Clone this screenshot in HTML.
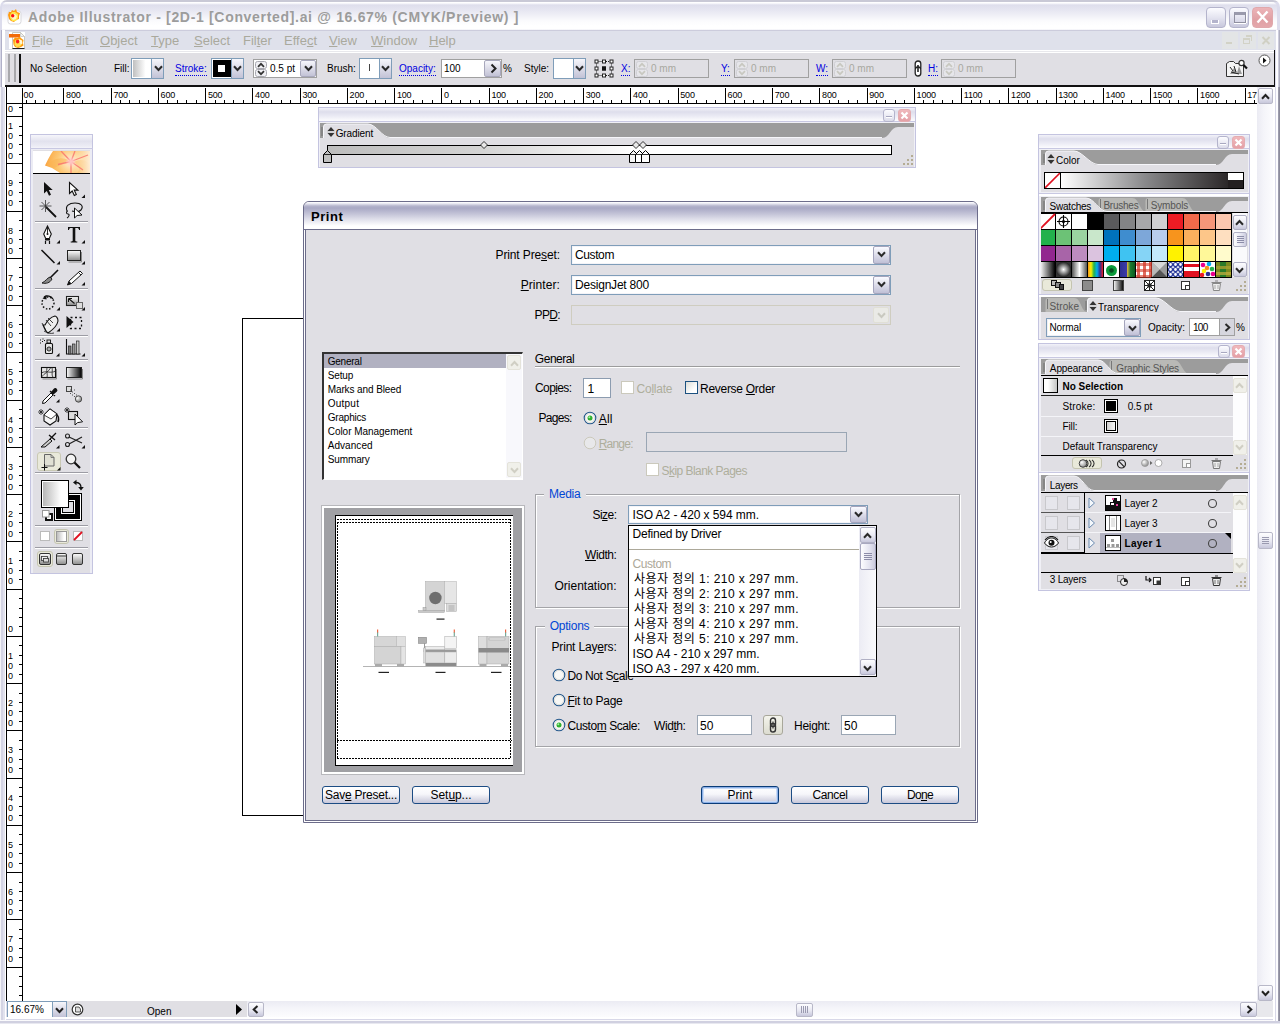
<!DOCTYPE html>
<html><head><meta charset="utf-8"><title>Adobe Illustrator</title>
<style>
*{box-sizing:border-box;margin:0;padding:0}
html,body{width:1280px;height:1024px;overflow:hidden;background:#fff}
body{position:relative;font-family:"Liberation Sans","Noto Sans CJK KR",sans-serif;font-size:10px;color:#000}
.a{position:absolute}
.t{position:absolute;white-space:nowrap;line-height:1}
u{text-decoration:underline;text-underline-offset:1px}
.wb{top:7px;width:20px;height:21px;border-radius:4px;border:1px solid #b4b4cc;background:linear-gradient(#fcfcff,#e4e4f0 50%,#c8c8dc)}
.mi{top:34px;font-size:13px;color:#aaa99d}
.mdi{top:32px;width:16px;height:17px;background:#e3e5e6}
.cl{top:64px;font-size:10px}
.bl{color:#0000e0;border-bottom:1px dotted #0000e0;padding-bottom:1px}
.cb{border:1px solid #7f9db9;top:58px;height:21px;background:#fff}
.dd{position:absolute;right:0;top:0;bottom:0;background:#dcdce6;border-left:1px solid #7f9db9}
.gf{top:59px;height:19px;border:1px solid #a0a0a0;background:#e0dfe4}
.gf b{position:absolute;left:10px;top:4px;font-weight:normal;font-size:10px;color:#a8a8a0;line-height:1}
.chev{position:absolute}
.sbb{width:15px;height:16px;border:1px solid #b8b8c8;border-radius:2px;background:linear-gradient(#fdfdff,#e8e8f2 55%,#c8c8dc)}
.sbh{border:1px solid #b8b8c8;border-radius:2px;background:linear-gradient(#fdfdff,#e8e8f2 55%,#c8c8dc)}
/* frame */
#frame{left:0;top:0;width:1280px;height:1024px;background:linear-gradient(#c9c9d6 0 2px,#dcdcec 2px);border-radius:7px 7px 0 0}
#title{left:2px;top:2px;width:1275px;height:28px;border-radius:5px 5px 0 0;background:linear-gradient(#fff 0,#fdfdff 1px,#dedeec 3px,#e4e4f0 7px,#efeff6 13px,#fbfbfd 19px,#fff 24px,#fff 27px,#ececf4 28px)}
#menu{left:5px;top:30px;width:1271px;height:20px;background:#dfe1eb;border-top:1px solid #ccccdc}
#ctrl{left:5px;top:50px;width:1270px;height:37px;background:linear-gradient(#fff 0 1px,#e8e8ec 1px 2px,#fff 2px 3px,#e0dfe4 3px);border-bottom:2px solid #111;border-right:1px solid #111}
#work{left:6px;top:87px;width:1252px;height:914px;background:#fff}
</style></head><body>
<div id="frame" class="a"></div>
<div id="title" class="a"></div>
<div id="menu" class="a"></div>
<div id="ctrl" class="a"></div>
<div id="work" class="a"></div>
<!--TITLE-->
<svg class="a" style="left:6px;top:8px" width="16" height="17" viewBox="0 0 16 17"><rect x="2" y="3" width="13" height="13" rx="2.5" fill="#fff" stroke="#d8d8dc" stroke-width="1"/><path d="M2 7l1-3 2 0 1-2 2 1 2-2 1 3 3 1-1 3 0 3-3 1-2 2-3-1-2-2z" fill="#ff9a10"/><path d="M4 7l2-3 3 0 3 2 0 4-2 3-4 0-2-3z" fill="#ffe44a"/><path d="M6 6l3 0 2 2-1 3-3 1-2-3z" fill="#fff6c8"/><circle cx="6.7" cy="7.8" r="1.7" fill="#ff1010"/></svg>
<div class="t" style="left:28px;top:10px;font-size:14px;font-weight:bold;color:#9c9c9c;letter-spacing:.68px">Adobe Illustrator - [2D-1 [Converted].ai @ 16.67% (CMYK/Preview) ]</div>
<div class="a wb" style="left:1206px"><i style="left:4px;top:12px;width:8px;height:4px;background:#b4b4cc;border:1px solid #fff;border-top:0;box-shadow:0 0 0 0 #fff;position:absolute"></i></div>
<div class="a wb" style="left:1229px"><i style="left:4px;top:4px;width:12px;height:11px;border:1px solid #9090a0;border-top:3px solid #9a9aac;position:absolute;box-shadow:0 1px 0 #fff,1px 0 0 #fff"></i></div>
<div class="a wb" style="left:1252px;width:21px;background:linear-gradient(#ecb4b8,#e0a0a4 60%,#e4a8ac);border-color:#e0a8ac"><svg width="21" height="20" viewBox="0 0 21 20" style="position:absolute;left:-1px;top:-1px"><path d="M5.5 4.5l10 11M15.5 4.5l-10 11" stroke="#fff" stroke-width="2.4" fill="none"/></svg></div>

<!--MENU-->
<svg class="a" style="left:8px;top:31px" width="18" height="19" viewBox="8 31 18 19"><rect x="9" y="32" width="16" height="17" fill="#fff"/><path d="M12.500 32.500h8l4 4v12h-12z" fill="#fff" stroke="#c8c8c0" stroke-width="1"/><path d="M20.500 32.500v4h4z" fill="#f0f0f0" stroke="#b8b8b0" stroke-width=".6"/><path d="M12.500 48.500h12" stroke="#222" stroke-width="1"/><rect x="9" y="34" width="11" height="3.500" fill="#f26a0a"/><path d="M13 40l2-2.500 2.500.5 2-1.500 2 2 2 1.500-.5 3 .5 2.500-2.500 1.500-3 1-3-1-1.500-2.500z" fill="#ff9a10"/><path d="M15 40.500l3-1.500 3.500 1.500.5 3.500-2 2.500-3.500.5-2-2.500z" fill="#ffe050"/><path d="M19 39l3 1.500.5 3-2 1z" fill="#fff8d8"/><ellipse cx="17.600" cy="41.500" rx="1.700" ry="2.100" fill="#ff2020"/></svg>
<div class="t mi" style="left:32px"><u>F</u>ile</div>
<div class="t mi" style="left:66px"><u>E</u>dit</div>
<div class="t mi" style="left:100px"><u>O</u>bject</div>
<div class="t mi" style="left:151px"><u>T</u>ype</div>
<div class="t mi" style="left:194px"><u>S</u>elect</div>
<div class="t mi" style="left:243px">Fil<u>t</u>er</div>
<div class="t mi" style="left:284px">Effe<u>c</u>t</div>
<div class="t mi" style="left:329px"><u>V</u>iew</div>
<div class="t mi" style="left:371px"><u>W</u>indow</div>
<div class="t mi" style="left:429px"><u>H</u>elp</div>
<div class="a mdi" style="left:1222px"><i class="a" style="left:4px;top:10px;width:6px;height:2px;background:#d2d2c6"></i></div>
<div class="a mdi" style="left:1240px"><i class="a" style="left:3px;top:6px;width:7px;height:6px;border:1px solid #d2d2c6;border-top-width:2px"></i><i class="a" style="left:6px;top:3px;width:6px;height:6px;border:1px solid #d2d2c6;border-top-width:2px;border-left:0;border-bottom:0"></i></div>
<div class="a mdi" style="left:1258px"><svg width="16" height="17" style="position:absolute;left:0;top:0"><path d="M4.500 5l7 7M11.500 5l-7 7" stroke="#d0d0c4" stroke-width="2" fill="none"/></svg></div>

<!--CTRL-->
<div class="a" style="left:8px;top:54px;width:2px;height:28px;background:#a8a8ac"></div><div class="a" style="left:14px;top:54px;width:2px;height:28px;background:#a8a8ac"></div><div class="a" style="left:19px;top:54px;width:2px;height:29px;background:#111"></div>
<div class="t cl" style="left:30px">No Selection</div>
<div class="t cl" style="left:114px">Fill:</div>
<div class="a cb" style="left:131px;width:33px"><i class="a" style="left:1px;top:1px;width:18px;height:17px;background:linear-gradient(90deg,#c0c0c0,#fff 70%)"></i><i class="dd" style="width:12px;background:linear-gradient(#f6f6fb,#dcdce8 50%,#c2c2d6)"></i></div><svg class="a" style="left:154px;top:65px" width="9" height="7" viewBox="0 0 9 7"><path d="M1 1.200l3.500 3.800L8 1.200" stroke="#2a2a2a" stroke-width="2" fill="none"/></svg>
<div class="t cl bl" style="left:175px">Stroke:</div>
<div class="a cb" style="left:211px;width:33px"><i class="a" style="left:1px;top:1px;width:18px;height:17px;background:#000"></i><i class="a" style="left:6px;top:6px;width:7px;height:7px;background:#fff"></i><i class="dd" style="width:12px;background:linear-gradient(#f6f6fb,#dcdce8 50%,#c2c2d6)"></i></div><svg class="a" style="left:233px;top:65px" width="9" height="7" viewBox="0 0 9 7"><path d="M1 1.200l3.500 3.800L8 1.200" stroke="#2a2a2a" stroke-width="2" fill="none"/></svg>
<div class="a" style="left:253px;top:59px;width:64px;height:19px;border:1px solid #a0a0a0;background:#fff"><i class="a" style="right:0;top:0;bottom:0;width:16px;background:linear-gradient(#f6f6fb,#dcdce8 50%,#c2c2d6);border:1px solid #a8a8bc;border-radius:2px"></i></div><svg class="a" style="left:255px;top:61px" width="12" height="16" viewBox="0 0 12 16"><rect x=".5" y=".5" width="11" height="7" rx="2" fill="#f0f0f4" stroke="#a8a8b0"/><rect x=".5" y="8.500" width="11" height="7" rx="2" fill="#f0f0f4" stroke="#a8a8b0"/><path d="M3 5.800l3-3 3 3M3 10.200l3 3 3-3" stroke="#333" stroke-width="1.700" fill="none"/></svg><svg class="a" style="left:304px;top:65px" width="9" height="7" viewBox="0 0 9 7"><path d="M1 1.200l3.500 3.800L8 1.200" stroke="#2a2a2a" stroke-width="2" fill="none"/></svg>
<div class="t cl" style="left:270px">0.5 pt</div>
<div class="t cl" style="left:327px">Brush:</div>
<div class="a cb" style="left:359px;width:33px"><i class="a" style="left:9px;top:5px;width:1px;height:7px;background:#444"></i><i class="dd" style="width:12px;background:linear-gradient(#f6f6fb,#dcdce8 50%,#c2c2d6)"></i></div><svg class="a" style="left:381px;top:65px" width="9" height="7" viewBox="0 0 9 7"><path d="M1 1.200l3.500 3.800L8 1.200" stroke="#2a2a2a" stroke-width="2" fill="none"/></svg>
<div class="t cl bl" style="left:399px">Opacity:</div>
<div class="a" style="left:441px;top:59px;width:61px;height:19px;border:1px solid #a0a0a0;background:#fff"><i class="a" style="right:0;top:0;bottom:0;width:17px;background:linear-gradient(#f6f6fb,#dcdce8 50%,#c2c2d6);border:1px solid #a8a8bc;border-radius:2px"></i></div><svg class="a" style="left:490px;top:63px" width="8" height="11" viewBox="0 0 8 11"><path d="M1.500 1.500l4 4-4 4" stroke="#222" stroke-width="2" fill="none"/></svg>
<div class="t cl" style="left:444px">100</div><div class="t cl" style="left:503px">%</div>
<div class="t cl" style="left:524px">Style:</div>
<div class="a cb" style="left:553px;width:33px"><i class="dd" style="width:12px;background:linear-gradient(#f6f6fb,#dcdce8 50%,#c2c2d6)"></i></div><svg class="a" style="left:575px;top:65px" width="9" height="7" viewBox="0 0 9 7"><path d="M1 1.200l3.500 3.800L8 1.200" stroke="#2a2a2a" stroke-width="2" fill="none"/></svg>
<svg class="a" style="left:594px;top:59px" width="20" height="19" viewBox="0 0 20 19"><rect x="1" y="1" width="3" height="3" fill="#fff" stroke="#222" stroke-width="1"/><rect x="8.5" y="1" width="3" height="3" fill="#fff" stroke="#222" stroke-width="1"/><rect x="16" y="1" width="3" height="3" fill="#fff" stroke="#222" stroke-width="1"/><rect x="1" y="8" width="3" height="3" fill="#fff" stroke="#222" stroke-width="1"/><rect x="8.5" y="8" width="3" height="3" fill="#fff" stroke="#222" stroke-width="1"/><rect x="16" y="8" width="3" height="3" fill="#fff" stroke="#222" stroke-width="1"/><rect x="1" y="15" width="3" height="3" fill="#fff" stroke="#222" stroke-width="1"/><rect x="8.5" y="15" width="3" height="3" fill="#fff" stroke="#222" stroke-width="1"/><rect x="16" y="15" width="3" height="3" fill="#fff" stroke="#222" stroke-width="1"/><path d="M4.500 2.500h4M12 2.500h4M4.500 16.500h4M12 16.500h4M2.500 4.500v3.500M2.500 11.500v3.500M17.500 4.500v3.500M17.500 11.500v3.500" stroke="#222" stroke-dasharray="1 1"/><rect x="8" y="7.500" width="4" height="4" fill="#111"/></svg>
<div class="t cl bl" style="left:621px">X:</div><div class="a gf" style="left:634px;width:75px"><b style="left:16px">0 mm</b></div><svg class="a" style="left:636px;top:61px" width="12" height="16" viewBox="0 0 12 16"><rect x=".5" y=".5" width="11" height="7" rx="2" fill="#e6e6ea" stroke="#d0d0d4"/><rect x=".5" y="8.500" width="11" height="7" rx="2" fill="#e6e6ea" stroke="#d0d0d4"/><path d="M3 5.800l3-3 3 3M3 10.200l3 3 3-3" stroke="#c8c8c0" stroke-width="1.700" fill="none"/></svg>
<div class="t cl bl" style="left:721px">Y:</div><div class="a gf" style="left:734px;width:75px"><b style="left:16px">0 mm</b></div><svg class="a" style="left:736px;top:61px" width="12" height="16" viewBox="0 0 12 16"><rect x=".5" y=".5" width="11" height="7" rx="2" fill="#e6e6ea" stroke="#d0d0d4"/><rect x=".5" y="8.500" width="11" height="7" rx="2" fill="#e6e6ea" stroke="#d0d0d4"/><path d="M3 5.800l3-3 3 3M3 10.200l3 3 3-3" stroke="#c8c8c0" stroke-width="1.700" fill="none"/></svg>
<div class="t cl bl" style="left:816px">W:</div><div class="a gf" style="left:832px;width:75px"><b style="left:16px">0 mm</b></div><svg class="a" style="left:834px;top:61px" width="12" height="16" viewBox="0 0 12 16"><rect x=".5" y=".5" width="11" height="7" rx="2" fill="#e6e6ea" stroke="#d0d0d4"/><rect x=".5" y="8.500" width="11" height="7" rx="2" fill="#e6e6ea" stroke="#d0d0d4"/><path d="M3 5.800l3-3 3 3M3 10.200l3 3 3-3" stroke="#c8c8c0" stroke-width="1.700" fill="none"/></svg>
<div class="t cl bl" style="left:928px">H:</div><div class="a gf" style="left:941px;width:75px"><b style="left:16px">0 mm</b></div><svg class="a" style="left:943px;top:61px" width="12" height="16" viewBox="0 0 12 16"><rect x=".5" y=".5" width="11" height="7" rx="2" fill="#e6e6ea" stroke="#d0d0d4"/><rect x=".5" y="8.500" width="11" height="7" rx="2" fill="#e6e6ea" stroke="#d0d0d4"/><path d="M3 5.800l3-3 3 3M3 10.200l3 3 3-3" stroke="#c8c8c0" stroke-width="1.700" fill="none"/></svg>
<svg class="a" style="left:913px;top:60px" width="10" height="17" viewBox="0 0 10 17"><rect x="2.200" y="1" width="5.600" height="9" rx="2.800" fill="#fff" stroke="#222" stroke-width="1.300"/><rect x="2.200" y="7" width="5.600" height="9" rx="2.800" fill="#fff" stroke="#222" stroke-width="1.300"/><path d="M5 5v7" stroke="#222" stroke-width="1.600"/></svg>
<svg class="a" style="left:1225px;top:58px" width="24" height="21" viewBox="0 0 24 21"><path d="M1.500 5.500l3-2h4l2 2h8v13h-17z" fill="#f4f4f4" stroke="#333" stroke-width="1"/><path d="M5 16l4-6 3 5 2-7 3 8z" fill="#999"/><path d="M5 9l3 4M9 8l2 6M6 14l8 2" stroke="#222" stroke-width="1"/><circle cx="16.500" cy="5" r="2.600" fill="#fff" stroke="#333" stroke-width="1.200"/><path d="M18.500 7l3.500 3.500" stroke="#111" stroke-width="2.200"/></svg>
<svg class="a" style="left:1258px;top:54px" width="13" height="13" viewBox="0 0 13 13"><circle cx="6.500" cy="6.500" r="5.500" fill="#fff" stroke="#555" stroke-width="1"/><path d="M5 3.500v6l3.500-3z" fill="#111"/></svg>
<!--/CTRL-->
<!--RULERS-->
<svg class="a" style="left:23px;top:88px;font-family:'Liberation Sans',sans-serif;font-size:9px;letter-spacing:-.2px" width="1234" height="16" viewBox="0 0 1234 16" shape-rendering="crispEdges"><rect width="1234" height="16" fill="#fff"/><path d="M3.5 12v4M12.5 12v4M21.5 12v4M31.5 12v4M40.5 0v16M50.5 12v4M59.5 12v4M69.5 12v4M78.5 12v4M88.5 0v16M97.5 12v4M106.5 12v4M116.5 12v4M125.5 12v4M135.5 0v16M144.5 12v4M154.5 12v4M163.5 12v4M173.5 12v4M182.5 0v16M192.5 12v4M201.5 12v4M210.5 12v4M220.5 12v4M229.5 0v16M239.5 12v4M248.5 12v4M258.5 12v4M267.5 12v4M277.5 0v16M286.5 12v4M295.5 12v4M305.5 12v4M314.5 12v4M324.5 0v16M333.5 12v4M343.5 12v4M352.5 12v4M362.5 12v4M371.5 0v16M380.5 12v4M390.5 12v4M399.5 12v4M409.5 12v4M418.5 0v16M428.5 12v4M437.5 12v4M447.5 12v4M456.5 12v4M466.5 0v16M475.5 12v4M484.5 12v4M494.5 12v4M503.5 12v4M513.5 0v16M522.5 12v4M532.5 12v4M541.5 12v4M551.5 12v4M560.5 0v16M570.5 12v4M579.5 12v4M588.5 12v4M598.5 12v4M607.5 0v16M617.5 12v4M626.5 12v4M636.5 12v4M645.5 12v4M655.5 0v16M664.5 12v4M673.5 12v4M683.5 12v4M692.5 12v4M702.5 0v16M711.5 12v4M721.5 12v4M730.5 12v4M740.5 12v4M749.5 0v16M758.5 12v4M768.5 12v4M777.5 12v4M787.5 12v4M796.5 0v16M806.5 12v4M815.5 12v4M825.5 12v4M834.5 12v4M844.5 0v16M853.5 12v4M862.5 12v4M872.5 12v4M881.5 12v4M891.5 0v16M900.5 12v4M910.5 12v4M919.5 12v4M929.5 12v4M938.5 0v16M948.5 12v4M957.5 12v4M966.5 12v4M976.5 12v4M985.5 0v16M995.5 12v4M1004.5 12v4M1014.5 12v4M1023.5 12v4M1033.5 0v16M1042.5 12v4M1051.5 12v4M1061.5 12v4M1070.5 12v4M1080.5 0v16M1089.5 12v4M1099.5 12v4M1108.5 12v4M1118.5 12v4M1127.5 0v16M1136.5 12v4M1146.5 12v4M1155.5 12v4M1165.5 12v4M1174.5 0v16M1184.5 12v4M1193.5 12v4M1203.5 12v4M1212.5 12v4M1222.5 0v16M1231.5 12v4M0 15.500h1234" stroke="#000" stroke-width="1" fill="none"/><text x="0.6" y="10">00</text><text x="43.1" y="10">800</text><text x="90.4" y="10">700</text><text x="137.6" y="10">600</text><text x="184.9" y="10">500</text><text x="232.1" y="10">400</text><text x="279.4" y="10">300</text><text x="326.6" y="10">200</text><text x="373.9" y="10">100</text><text x="421.1" y="10">0</text><text x="468.4" y="10">100</text><text x="515.6" y="10">200</text><text x="562.8" y="10">300</text><text x="610.1" y="10">400</text><text x="657.3" y="10">500</text><text x="704.6" y="10">600</text><text x="751.8" y="10">700</text><text x="799.1" y="10">800</text><text x="846.3" y="10">900</text><text x="893.6" y="10">1000</text><text x="940.8" y="10">1100</text><text x="988.1" y="10">1200</text><text x="1035.3" y="10">1300</text><text x="1082.6" y="10">1400</text><text x="1129.8" y="10">1500</text><text x="1177.1" y="10">1600</text><text x="1224.3" y="10">1700</text></svg>
<svg class="a" style="left:7px;top:104px;font-family:'Liberation Sans',sans-serif;font-size:9px" width="16" height="897" viewBox="0 0 16 897" shape-rendering="crispEdges"><rect width="16" height="897" fill="#fff"/><path d="M12 3.5h4M0 12.5h16M12 22.5h4M12 31.5h4M12 40.5h4M12 50.5h4M0 59.5h16M12 69.5h4M12 78.5h4M12 88.5h4M12 97.5h4M0 107.5h16M12 116.5h4M12 126.5h4M12 135.5h4M12 144.5h4M0 154.5h16M12 163.5h4M12 173.5h4M12 182.5h4M12 192.5h4M0 201.5h16M12 211.5h4M12 220.5h4M12 229.5h4M12 239.5h4M0 248.5h16M12 258.5h4M12 267.5h4M12 277.5h4M12 286.5h4M0 296.5h16M12 305.5h4M12 314.5h4M12 324.5h4M12 333.5h4M0 343.5h16M12 352.5h4M12 362.5h4M12 371.5h4M12 381.5h4M0 390.5h16M12 400.5h4M12 409.5h4M12 418.5h4M12 428.5h4M0 437.5h16M12 447.5h4M12 456.5h4M12 466.5h4M12 475.5h4M0 485.5h16M12 494.5h4M12 504.5h4M12 513.5h4M12 522.5h4M0 532.5h16M12 541.5h4M12 551.5h4M12 560.5h4M12 570.5h4M0 579.5h16M12 589.5h4M12 598.5h4M12 607.5h4M12 617.5h4M0 626.5h16M12 636.5h4M12 645.5h4M12 655.5h4M12 664.5h4M0 674.5h16M12 683.5h4M12 692.5h4M12 702.5h4M12 711.5h4M0 721.5h16M12 730.5h4M12 740.5h4M12 749.5h4M12 759.5h4M0 768.5h16M12 778.5h4M12 787.5h4M12 796.5h4M12 806.5h4M0 815.5h16M12 825.5h4M12 834.5h4M12 844.5h4M12 853.5h4M0 863.5h16M12 872.5h4M12 882.5h4M12 891.5h4M15.500 0v897" stroke="#000" stroke-width="1" fill="none"/><text x="1" y="7.8">0</text><text x="1" y="25.0">1</text><text x="1" y="35.0">0</text><text x="1" y="45.0">0</text><text x="1" y="55.0">0</text><text x="1" y="82.3">9</text><text x="1" y="92.3">0</text><text x="1" y="102.3">0</text><text x="1" y="129.6">8</text><text x="1" y="139.6">0</text><text x="1" y="149.6">0</text><text x="1" y="176.8">7</text><text x="1" y="186.8">0</text><text x="1" y="196.8">0</text><text x="1" y="224.1">6</text><text x="1" y="234.1">0</text><text x="1" y="244.1">0</text><text x="1" y="271.3">5</text><text x="1" y="281.3">0</text><text x="1" y="291.3">0</text><text x="1" y="318.6">4</text><text x="1" y="328.6">0</text><text x="1" y="338.6">0</text><text x="1" y="365.8">3</text><text x="1" y="375.8">0</text><text x="1" y="385.8">0</text><text x="1" y="413.1">2</text><text x="1" y="423.1">0</text><text x="1" y="433.1">0</text><text x="1" y="460.3">1</text><text x="1" y="470.3">0</text><text x="1" y="480.3">0</text><text x="1" y="527.5">0</text><text x="1" y="554.8">1</text><text x="1" y="564.8">0</text><text x="1" y="574.8">0</text><text x="1" y="602.0">2</text><text x="1" y="612.0">0</text><text x="1" y="622.0">0</text><text x="1" y="649.3">3</text><text x="1" y="659.3">0</text><text x="1" y="669.3">0</text><text x="1" y="696.5">4</text><text x="1" y="706.5">0</text><text x="1" y="716.5">0</text><text x="1" y="743.8">5</text><text x="1" y="753.8">0</text><text x="1" y="763.8">0</text><text x="1" y="791.0">6</text><text x="1" y="801.0">0</text><text x="1" y="811.0">0</text><text x="1" y="838.3">7</text><text x="1" y="848.3">0</text><text x="1" y="858.3">0</text></svg>
<div class="a" style="left:6px;top:87px;width:1px;height:914px;background:#000"></div><div class="a" style="left:7px;top:88px;width:16px;height:16px;background:#fff;border-right:1px solid #000;border-bottom:1px solid #000"></div>

<!--CANVAS-->
<div class="a" style="left:242px;top:318px;width:500px;height:498px;border:1px solid #000"></div>

<!--TOOLBOX-->
<div class="a" style="left:30px;top:134px;width:63px;height:440px;background:#ececf4;border:1px solid #c4c4e0"></div>
<div class="a" style="left:31px;top:135px;width:61px;height:14px;background:linear-gradient(#f6f6fb,#e2e2ee 45%,#ececf5 80%,#f8f8fc)"></div>
<div class="a" style="left:30px;top:148px;width:63px;height:1px;background:#c8c8e2"></div>
<div class="a" style="left:33px;top:150px;width:57px;height:423px;background:#e0dfe4"></div>
<svg class="a" style="left:33px;top:151px" width="57" height="23" viewBox="0 0 57 23"><defs><radialGradient id="fl" cx="38" cy="10.500" r="27" gradientUnits="userSpaceOnUse"><stop offset="0" stop-color="#fff0ea"/><stop offset=".18" stop-color="#ffe3b8"/><stop offset=".5" stop-color="#fdc875"/><stop offset=".85" stop-color="#fbae4c"/><stop offset="1" stop-color="#f89a3c"/></radialGradient><linearGradient id="flr" x1="0" x2="1"><stop offset="0" stop-color="#fff" stop-opacity="0"/><stop offset="1" stop-color="#fff" stop-opacity=".75"/></linearGradient><filter id="bl" x="-20%" y="-20%" width="140%" height="140%"><feGaussianBlur stdDeviation=".7"/></filter><filter id="bl2" x="-20%" y="-20%" width="140%" height="140%"><feGaussianBlur stdDeviation="1.500"/></filter></defs><rect width="57" height="23" fill="#fff"/><path d="M12 14.500Q15 8 18 3L20 0H57V22H27Q22 19 19 17Z" fill="url(#fl)"/><path d="M13 14Q24 4 36 9Q28 14 21 17Z" fill="#fbb452" opacity=".55" filter="url(#bl)"/><path d="M40 11Q52 6 57 14V22H44Q50 16 40 11Z" fill="#fbb858" opacity=".5" filter="url(#bl)"/><rect x="42" width="15" height="22" fill="url(#flr)"/><g stroke="#f9716c" stroke-width="1.300" opacity=".8" fill="none" filter="url(#bl)"><path d="M38 10.500L28 0M38 10.500L42 0M38 10.500L55 4M38 10.500L50 19M38 10.500L38 22M38 10.500L25 13.500"/></g><circle cx="38" cy="10.500" r="3.500" fill="#ffc8c4" filter="url(#bl2)"/><rect y="22" width="57" height="1" fill="#000"/></svg>
<div class="a" style="left:35px;top:221px;width:53px;height:2px;background:linear-gradient(#9c9ca4 0 1px,#fff 1px)"></div>
<div class="a" style="left:35px;top:288px;width:53px;height:2px;background:linear-gradient(#9c9ca4 0 1px,#fff 1px)"></div>
<div class="a" style="left:35px;top:335px;width:53px;height:2px;background:linear-gradient(#9c9ca4 0 1px,#fff 1px)"></div>
<div class="a" style="left:35px;top:359px;width:53px;height:2px;background:linear-gradient(#9c9ca4 0 1px,#fff 1px)"></div>
<div class="a" style="left:35px;top:427px;width:53px;height:2px;background:linear-gradient(#9c9ca4 0 1px,#fff 1px)"></div>
<div class="a" style="left:35px;top:472px;width:53px;height:2px;background:linear-gradient(#9c9ca4 0 1px,#fff 1px)"></div>
<div class="a" style="left:35px;top:525px;width:53px;height:2px;background:linear-gradient(#9c9ca4 0 1px,#fff 1px)"></div>
<div class="a" style="left:35px;top:547px;width:53px;height:2px;background:linear-gradient(#9c9ca4 0 1px,#fff 1px)"></div>
<svg class="a" style="left:30px;top:174px" width="63" height="400" viewBox="30 174 63 400"><defs><linearGradient id="gw" x1="0" x2="1"><stop offset="0" stop-color="#fff"/><stop offset="1" stop-color="#000"/></linearGradient><linearGradient id="gg" x1="0" x2="0" y1="0" y2="1"><stop offset="0" stop-color="#fff"/><stop offset="1" stop-color="#8c8c8c"/></linearGradient><linearGradient id="gf" x1="0" x2="1"><stop offset="0" stop-color="#b8b8b8"/><stop offset=".75" stop-color="#fff"/></linearGradient><radialGradient id="gb" cx=".35" cy=".35" r=".7"><stop offset="0" stop-color="#fff"/><stop offset="1" stop-color="#777"/></radialGradient></defs><path d="M44 182v11.500l2.800-2.600 2.200 4.800 2-.9-2.200-4.800h3.900z" fill="#111"/><path d="M69.500 182.500v11l2.700-2.500 2.100 4.500 2-.9-2.100-4.500h3.700z" fill="#fff" stroke="#111" stroke-width="1.100"/><path d="M85 198v-3.500l-3.500 3.500z" fill="#111"/><path d="M46 207l10 10" stroke="#111" stroke-width="1.800"/><path d="M45.500 200v12M39.500 206h12M41.500 202l8 8M49.500 202l-8 8" stroke="#333" stroke-width=".8"/><path d="M67 211c-2-5 2-8 8-8s9 3 6 7c-2 2-6 2-9 1M68 211c-2 0-2 3 0 3s1 3-1 4" stroke="#111" stroke-width="1.100" fill="none"/><path d="M74.500 208v10l2.600-2.500 4.900-.5z" fill="#fff" stroke="#111" stroke-width="1"/><path d="M47.500 226l-3.800 8 2 4.500h3.600l2-4.500z" fill="#fff" stroke="#111" stroke-width="1.100"/><path d="M47.500 227v6" stroke="#111" stroke-width=".9"/><circle cx="47.500" cy="234" r="1" fill="#111"/><rect x="45" y="239" width="5" height="1.500" fill="#111"/><path d="M45.500 241v3M49.500 241v3" stroke="#111" stroke-width="1.200"/><path d="M60 243.5v-3.500l-3.500 3.500z" fill="#111"/><path d="M68 227h12v3h-1c0-1.500-1-2-2-2h-1.700v12.500c0 .8.700 1 2 1v.9h-6.600v-.9c1.300 0 2-.2 2-1V228h-1.700c-1 0-2 .5-2 2h-1z" fill="#111"/><path d="M85 243.5v-3.500l-3.500 3.500z" fill="#111"/><path d="M41.500 250l13 13" stroke="#111" stroke-width="1.500"/><path d="M60 264.5v-3.500l-3.500 3.500z" fill="#111"/><rect x="67.500" y="250.500" width="13" height="10" fill="url(#gg)" stroke="#222" stroke-width="1"/><path d="M68.500 262h13v-10" stroke="#888" stroke-width="1" fill="none"/><path d="M85 264.5v-3.500l-3.500 3.500z" fill="#111"/><path d="M58 270l-9 9" stroke="#111" stroke-width="1.600"/><path d="M50 277c-3 1-4 4-8 6 4 1 8 0 10-4z" fill="#888" stroke="#111" stroke-width=".9"/><path d="M80 271l2.500 2.500-11 10-4 1.500 1.500-4z" fill="#fff" stroke="#111" stroke-width="1"/><path d="M67.500 285l1.500-4 2.500 2.500z" fill="#111"/><path d="M78.500 272.500l2.500 2.500" stroke="#111" stroke-width=".9"/><path d="M85 285.5v-3.500l-3.500 3.500z" fill="#111"/><circle cx="48" cy="303" r="6" fill="none" stroke="#111" stroke-width="1.500" stroke-dasharray="1.500 1.800"/><path d="M44 297c3-2 7-1 9 2" stroke="#111" stroke-width="1.300" fill="none"/><path d="M42.500 298.500l4-3.500v4.500z" fill="#111"/><path d="M60 310.5v-3.500l-3.500 3.500z" fill="#111"/><rect x="66.500" y="296.500" width="12" height="9" fill="url(#gg)" stroke="#222" stroke-width="1.100"/><rect x="76.500" y="302.500" width="6" height="6" fill="#ddd" stroke="#666" stroke-width="1"/><path d="M68.500 298.500l6 5M68.500 298.500h3.500M68.500 298.500v3.500" stroke="#111" stroke-width="1.100" fill="none"/><path d="M85 310.5v-3.500l-3.500 3.500z" fill="#111"/><path d="M43 325c2 4 2 6 5 8 3-2 9-6 10-12 0-3-2-5-3-5-4 1-8 5-10 9z" fill="#eee" stroke="#111" stroke-width="1.100"/><path d="M42 323c1 2 3 5 4 8M46 320l5 6M48 318l5 5M44 331c3 2 7 3 10 2" stroke="#111" stroke-width=".8" fill="none"/><path d="M60 331.5v-3.500l-3.500 3.500z" fill="#111"/><path d="M66.500 316v12l7-6z" fill="#111"/><rect x="70.500" y="317.500" width="11" height="11" fill="none" stroke="#111" stroke-width="1.300" stroke-dasharray="2 2.500"/><rect x="45.500" y="343.500" width="7" height="10" rx="1" fill="#e8e8e8" stroke="#111" stroke-width="1.100"/><rect x="47" y="340" width="3.500" height="3" fill="#ddd" stroke="#111" stroke-width=".9"/><circle cx="49" cy="349" r="2" fill="#fff" stroke="#111" stroke-width="1"/><circle cx="49" cy="349" r=".7" fill="#111"/><path d="M40 340h1M42 341.500h1M40 343h1M42.500 339h1M44 340.500h1" stroke="#111" stroke-width="1"/><path d="M59.5 356.5v-3.500l-3.500 3.500z" fill="#111"/><path d="M66.500 339v15h14" stroke="#111" stroke-width="1.100" fill="none"/><rect x="68.500" y="346" width="2.500" height="8" fill="#777" stroke="#222" stroke-width=".7"/><rect x="72.500" y="344" width="2.500" height="10" fill="#999" stroke="#222" stroke-width=".7"/><rect x="76.500" y="341" width="2.500" height="13" fill="#ccc" stroke="#222" stroke-width=".7"/><path d="M85 356.5v-3.500l-3.500 3.500z" fill="#111"/><rect x="41.500" y="367.500" width="14" height="10" fill="#e8e8e8" stroke="#111" stroke-width="1.100"/><path d="M41.500 373c4-3 9 1 14-2M47 367.500c-1 4 1 7 0 10M52 367.500c1 3-1 7 1 10M41.500 377c3-4 7-5 9-9" stroke="#222" stroke-width=".8" fill="none"/><path d="M42.500 379h14v-10" stroke="#888" stroke-width="1" fill="none"/><rect x="66.500" y="367.500" width="15" height="10" fill="url(#gw)" stroke="#222" stroke-width="1"/><path d="M67.500 379h15v-10" stroke="#888" stroke-width="1" fill="none"/><path d="M43 401l8-8 2 2-8 8-2.500.5z" fill="#fff" stroke="#111" stroke-width="1"/><path d="M50 391l5 5M51.500 392.500l3-3.500c1-1 3 1 2 2l-3.500 3z" fill="#111" stroke="#111" stroke-width="1.300"/><path d="M59.5 402.5v-3.500l-3.500 3.500z" fill="#111"/><rect x="66.500" y="386.500" width="5" height="5" fill="#ddd" stroke="#444" stroke-width="1"/><circle cx="78.500" cy="399" r="3.200" fill="url(#gb)" stroke="#444" stroke-width=".9"/><path d="M70 393.500h1M72 392h1M72 395h1M74 393.500h1M74 396.500h1M76 395h1M70 390h1M74 390h1" stroke="#555" stroke-width="1"/><path d="M44 415l6-6 7 5-1 7-6 4-6-4z" fill="#f4f4f4" stroke="#111" stroke-width="1.100"/><path d="M50 409l7 5-6 5-7-4z" fill="#fff" stroke="#111" stroke-width=".8"/><path d="M56 414c3 2 3 5 2 8" stroke="#111" stroke-width="1.500" fill="none"/><path d="M41 409v6M38 412h6M39 410l4 4M43 410l-4 4" stroke="#222" stroke-width=".8"/><rect x="68.500" y="411.500" width="9" height="8" fill="#ddd" stroke="#111" stroke-width="1.100"/><path d="M75 414v11l2.600-2.400 5-.8z" fill="#fff" stroke="#111" stroke-width="1"/><path d="M67 407v6M64 410h6M65 408l4 4M69 408l-4 4" stroke="#222" stroke-width=".8"/><path d="M41 447l9-8 2 2-7 6z" fill="#ccc" stroke="#111" stroke-width="1"/><path d="M50 439l6-6M49 435l6 5" stroke="#111" stroke-width="1.300"/><path d="M59.5 448.5v-3.500l-3.500 3.500z" fill="#111"/><path d="M69 437l13 6M69 444l13-7" stroke="#222" stroke-width="1.300"/><circle cx="67.500" cy="436" r="2" fill="none" stroke="#222" stroke-width="1.100"/><circle cx="67.500" cy="444.500" r="2" fill="none" stroke="#222" stroke-width="1.100"/><path d="M85 448.5v-3.500l-3.500 3.500z" fill="#111"/><rect x="37.500" y="452.500" width="23" height="18" rx="2.500" fill="#e9e9da" stroke="#c9c9b4" stroke-width="1"/><path d="M44.500 454.500h6.500l3 3v8.500h-9.500z" fill="#e0e0d4" stroke="#666" stroke-width="1"/><path d="M51 454.500v3h3" stroke="#666" stroke-width=".8" fill="none"/><path d="M44.500 464v6.500M41.500 467.500h6" stroke="#111" stroke-width="1"/><path d="M60.5 470.5v-3.500l-3.500 3.500z" fill="#111"/><circle cx="71" cy="459" r="4.800" fill="#f4f4f4" stroke="#333" stroke-width="1.300"/><path d="M74.500 462.500l5.500 5.500" stroke="#111" stroke-width="2.200"/><rect x="54" y="493" width="28" height="28" fill="#000"/><rect x="55" y="494" width="26" height="26" fill="#fff"/><rect x="56" y="495" width="24" height="24" fill="#000"/><rect x="61" y="500" width="14" height="14" fill="#fff"/><rect x="62" y="501" width="12" height="12" fill="#000"/><rect x="63" y="502" width="10" height="10" fill="#e0dfe4"/><rect x="41" y="480" width="28" height="28" fill="#000"/><rect x="42" y="481" width="26" height="26" fill="#fff"/><rect x="43" y="482" width="24" height="24" fill="url(#gf)"/><path d="M75.500 482.500q5.500 0 5.500 5" stroke="#111" stroke-width="1.300" fill="none"/><path d="M73 482.500l3.500-2.800v5.600zM81 490.500l-2.800-3.500h5.600z" fill="#111"/><rect x="46" y="514" width="6" height="6" fill="#fff" stroke="#111" stroke-width="2"/><rect x="42.500" y="510.500" width="6.500" height="6.500" fill="#fff" stroke="#999" stroke-width="1"/><rect x="40.500" y="531.500" width="9" height="9" fill="#fff" stroke="#bbb" stroke-width="1"/><rect x="54.500" y="529.500" width="14" height="14" rx="2.500" fill="#e9e9da" stroke="#c4c4b0" stroke-width="1"/><rect x="56.500" y="531.500" width="10" height="10" fill="url(#gf)" stroke="#999" stroke-width="1"/><rect x="73.500" y="531.500" width="9" height="9" fill="#fff" stroke="#bbb" stroke-width="1"/><path d="M74 540l8-8" stroke="#e01020" stroke-width="1.800"/><rect x="37.500" y="551.500" width="15" height="15" rx="2.500" fill="#e9e9da" stroke="#c4c4b0" stroke-width="1"/><rect x="39.500" y="553.500" width="11" height="11" rx="1.500" fill="url(#gg)" stroke="#333" stroke-width="1"/><rect x="41.500" y="556.500" width="6" height="4" fill="#eee" stroke="#333" stroke-width=".8"/><rect x="43.500" y="558.500" width="5" height="3.500" fill="#ddd" stroke="#333" stroke-width=".8"/><rect x="56.500" y="553.500" width="10" height="11" rx="1.500" fill="url(#gg)" stroke="#333" stroke-width="1"/><path d="M56.500 556h10" stroke="#333" stroke-width="1"/><rect x="72.500" y="553.500" width="10" height="11" rx="1.500" fill="url(#gg)" stroke="#333" stroke-width="1"/></svg>
<!--/TOOLBOX-->
<!--GRADIENT-->
<div class="a" style="left:318px;top:107px;width:598px;height:61px;background:#f0f0f6;border:1px solid #c4c4e0"></div>
<div class="a" style="left:318px;top:107px;width:598px;height:15px;background:linear-gradient(#f2f2f9,#dedeec 30%,#ececf5 65%,#fcfcfe);border:1px solid #c4c4e0;border-bottom:1px solid #c8c8e2"></div>
<div class="a" style="left:883px;top:109px;width:12px;height:13px;border:1px solid #b4b4cc;border-radius:3px;background:linear-gradient(#fcfcff,#dcdcea)"></div>
<div class="a" style="left:886px;top:116px;width:6px;height:2px;background:#a8a8c0;border-bottom:1px solid #fff"></div>
<div class="a" style="left:898px;top:109px;width:13px;height:13px;border:1px solid #e4acb0;border-radius:3px;background:linear-gradient(#f0b8bc,#e4a0a6)"></div>
<svg class="a" style="left:898px;top:109px" width="13" height="13"><path d="M3.500 3.500l6 6M9.500 3.500l-6 6" stroke="#fff" stroke-width="2.200" fill="none"/></svg>
<svg class="a" style="left:320px;top:123px" width="594" height="15" viewBox="320 123 594 15"><rect x="320" y="123" width="594" height="15" fill="#e0dfe4"/><path d="M320 123H914V127H898C890 127 890 138 882 138H320Z" fill="#9c9c9c"/><path d="M323.5 138V127Q323.5 124 326.5 124H368C376 124 382 138 390 138Z" fill="#e0dfe4"/><path d="M323.5 138V127Q323.5 124 326.5 124H368C376 124 382 137.5 390 137.5H882" fill="none" stroke="#f6f6fa" stroke-width="1"/><path d="M322.0 136V127" stroke="#707070" stroke-width="1"/></svg>
<div class="a" style="left:320px;top:138px;width:594px;height:29px;background:#e0dfe4"></div>
<svg class="a" style="left:327px;top:127px" width="8" height="10" viewBox="0 0 8 10"><path d="M4 0l3.500 4h-7zM4 10l3.500-4h-7z" fill="#333"/><path d="M0 5h8" stroke="#bbb" stroke-width=".8"/></svg>
<div class="t" style="left:335.7px;top:128.5px;letter-spacing:-0.11px;">Gradient</div>
<div class="a" style="left:327px;top:145px;width:565px;height:10px;border:1px solid #000;background:linear-gradient(90deg,#bdbdbd 0,#d4d4d4 27%,#fff 55%)"></div>
<svg class="a" style="left:323.0px;top:150px" width="9" height="13" viewBox="0 0 9 13"><path d="M.5 4.500L4.500 .5l4 4V12.500h-8z" fill="#c0c0c0" stroke="#000" stroke-width="1"/><path d="M.5 4.500h8" stroke="#000" stroke-width=".8"/></svg><svg class="a" style="left:628.5px;top:150px" width="9" height="13" viewBox="0 0 9 13"><path d="M.5 4.500L4.500 .5l4 4V12.500h-8z" fill="#f4f4f4" stroke="#000" stroke-width="1"/><path d="M.5 4.500h8" stroke="#000" stroke-width=".8"/></svg><svg class="a" style="left:634.5px;top:150px" width="9" height="13" viewBox="0 0 9 13"><path d="M.5 4.500L4.500 .5l4 4V12.500h-8z" fill="#fff" stroke="#000" stroke-width="1"/><path d="M.5 4.500h8" stroke="#000" stroke-width=".8"/></svg><svg class="a" style="left:641.0px;top:150px" width="9" height="13" viewBox="0 0 9 13"><path d="M.5 4.500L4.500 .5l4 4V12.500h-8z" fill="#fff" stroke="#000" stroke-width="1"/><path d="M.5 4.500h8" stroke="#000" stroke-width=".8"/></svg>
<svg class="a" style="left:479.5px;top:141px" width="8" height="8" viewBox="0 0 8 8"><path d="M4 .5l3.500 3.500-3.500 3.500-3.500-3.500z" fill="#e8e8e8" stroke="#222" stroke-width=".9"/></svg><svg class="a" style="left:632px;top:141px" width="8" height="8" viewBox="0 0 8 8"><path d="M4 .5l3.500 3.500-3.500 3.500-3.500-3.500z" fill="#e8e8e8" stroke="#222" stroke-width=".9"/></svg><svg class="a" style="left:638.5px;top:141px" width="8" height="8" viewBox="0 0 8 8"><path d="M4 .5l3.500 3.500-3.500 3.500-3.500-3.500z" fill="#e8e8e8" stroke="#222" stroke-width=".9"/></svg>
<div class="a" style="left:911px;top:155px;width:2px;height:2px;background:#b4ac94"></div><div class="a" style="left:907px;top:159px;width:2px;height:2px;background:#b4ac94"></div><div class="a" style="left:911px;top:159px;width:2px;height:2px;background:#b4ac94"></div><div class="a" style="left:903px;top:163px;width:2px;height:2px;background:#b4ac94"></div><div class="a" style="left:907px;top:163px;width:2px;height:2px;background:#b4ac94"></div><div class="a" style="left:911px;top:163px;width:2px;height:2px;background:#b4ac94"></div>
<!--/GRADIENT-->
<!--RIGHTPANELS-->
<div class="a" style="left:1038px;top:134px;width:212px;height:206px;background:#f0f0f6;border:1px solid #c4c4e0"></div>
<div class="a" style="left:1038px;top:134px;width:212px;height:15px;background:linear-gradient(#f2f2f9,#dedeec 30%,#ececf5 65%,#fcfcfe);border:1px solid #c4c4e0;border-bottom:1px solid #c8c8e2"></div>
<div class="a" style="left:1217px;top:136px;width:12px;height:13px;border:1px solid #b4b4cc;border-radius:3px;background:linear-gradient(#fcfcff,#dcdcea)"></div>
<div class="a" style="left:1220px;top:143px;width:6px;height:2px;background:#a8a8c0;border-bottom:1px solid #fff"></div>
<div class="a" style="left:1232px;top:136px;width:13px;height:13px;border:1px solid #e4acb0;border-radius:3px;background:linear-gradient(#f0b8bc,#e4a0a6)"></div>
<svg class="a" style="left:1232px;top:136px" width="13" height="13"><path d="M3.500 3.500l6 6M9.500 3.500l-6 6" stroke="#fff" stroke-width="2.200" fill="none"/></svg>
<svg class="a" style="left:1041px;top:150px" width="207" height="15" viewBox="1041 150 207 15"><rect x="1041" y="150" width="207" height="15" fill="#e0dfe4"/><path d="M1041 150H1248V154H1232C1224 154 1224 165 1216 165H1041Z" fill="#9c9c9c"/><path d="M1045.5 165V154Q1045.5 151 1048.5 151H1074C1082 151 1090 165 1098 165Z" fill="#e0dfe4"/><path d="M1045.5 165V154Q1045.5 151 1048.5 151H1074C1082 151 1090 164.5 1098 164.5H1216" fill="none" stroke="#f6f6fa" stroke-width="1"/><path d="M1044.0 163V154" stroke="#707070" stroke-width="1"/></svg>
<div class="a" style="left:1041px;top:165px;width:207px;height:27px;background:#e0dfe4"></div>
<svg class="a" style="left:1047px;top:154px" width="8" height="10" viewBox="0 0 8 10"><path d="M4 0l3.500 4h-7zM4 10l3.500-4h-7z" fill="#333"/><path d="M0 5h8" stroke="#bbb" stroke-width=".8"/></svg>
<div class="t" style="left:1056.0px;top:155.5px;">Color</div>
<div class="a" style="left:1044px;top:172px;width:200px;height:17px;border:1px solid #000;background:linear-gradient(90deg,#fff 0,#fff 8%,#8a8a8c 50%,#231f20 96%)"></div>
<svg class="a" style="left:1045px;top:173px" width="16" height="15"><rect width="15" height="15" fill="#fff"/><path d="M0 15L15 0" stroke="#e01020" stroke-width="1.600"/><path d="M15.500 0v15" stroke="#000"/></svg>
<div class="a" style="left:1228px;top:173px;width:15px;height:7px;background:#fff"></div>
<div class="a" style="left:1228px;top:180px;width:15px;height:8px;background:#231f20"></div>
<div class="a" style="left:1039px;top:192px;width:210px;height:4px;background:linear-gradient(#f0f0f6 0 1px,#c8c8e2 1px 2px,#fff 2px)"></div>
<svg class="a" style="left:1041px;top:197px" width="207" height="15" viewBox="1041 197 207 15"><rect x="1041" y="197" width="207" height="15" fill="#e0dfe4"/><path d="M1041 197H1248V201H1232C1224 201 1224 212 1216 212H1041Z" fill="#9c9c9c"/><path d="M1145.5 212V201Q1145.5 198 1148.5 198H1182C1190 198 1189 212 1197 212Z" fill="#b9b9b6"/><path d="M1147.5 199V209" stroke="#777" stroke-width="1"/><path d="M1098.5 212V201Q1098.5 198 1101.5 198H1132C1140 198 1139 212 1147 212Z" fill="#b9b9b6"/><path d="M1100.5 199V209" stroke="#777" stroke-width="1"/><path d="M1045.5 212V201Q1045.5 198 1048.5 198H1086C1094 198 1099 212 1107 212Z" fill="#e0dfe4"/><path d="M1045.5 212V201Q1045.5 198 1048.5 198H1086C1094 198 1099 211.5 1107 211.5H1216" fill="none" stroke="#f6f6fa" stroke-width="1"/><path d="M1044.0 210V201" stroke="#707070" stroke-width="1"/></svg>
<div class="t" style="left:1049.6px;top:201.5px;letter-spacing:-0.23px;">Swatches</div>
<div class="t" style="left:1103.4px;top:200.5px;letter-spacing:-0.24px;color:#555;">Brushes</div>
<div class="t" style="left:1150.7px;top:200.5px;letter-spacing:-0.12px;color:#555;">Symbols</div>
<div class="a" style="left:1041px;top:212px;width:207px;height:82px;background:#e0dfe4"></div>
<div class="a" style="left:1041px;top:212px;width:207px;height:1px;background:#000"></div>
<svg class="a" style="left:1041px;top:213px" width="191" height="65" viewBox="1 0 191 65" shape-rendering="crispEdges"><defs><linearGradient id="sg1" x1="0" x2="1"><stop offset="0" stop-color="#fff"/><stop offset="1" stop-color="#000"/></linearGradient><radialGradient id="sg2"><stop offset="0" stop-color="#fff"/><stop offset="1" stop-color="#222"/></radialGradient><linearGradient id="sg3" x1="0" x2="1"><stop offset="0" stop-color="#555"/><stop offset=".5" stop-color="#fff"/><stop offset="1" stop-color="#555"/></linearGradient><linearGradient id="sg4" x1="0" x2="1"><stop offset="0" stop-color="#f7941d"/><stop offset=".2" stop-color="#fff200"/><stop offset=".4" stop-color="#22b14c"/><stop offset=".6" stop-color="#00aeef"/><stop offset=".8" stop-color="#2e3192"/><stop offset="1" stop-color="#ed1c24"/></linearGradient><linearGradient id="sp2" x1="0" x2="1"><stop offset="0" stop-color="#2e3192"/><stop offset=".45" stop-color="#3a3aa8"/><stop offset=".5" stop-color="#c8b040"/><stop offset=".7" stop-color="#1a7a30"/><stop offset="1" stop-color="#0a5a20"/></linearGradient></defs><rect width="192" height="66" fill="#000"/><rect x="0" y="1" width="15" height="15" fill="#fff"/><path d="M0 16L15 1" stroke="#e01020" stroke-width="1.800" shape-rendering="auto"/><rect x="16" y="1" width="15" height="15" fill="#fff"/><g shape-rendering="auto" stroke="#000" fill="none" stroke-width="1.100"><circle cx="23.5" cy="8.5" r="4.500"/><circle cx="23.5" cy="8.5" r="1" fill="#000"/><path d="M23.5 2v13M17 8.5h13"/></g><rect x="32" y="1" width="15" height="15" fill="#ffffff"/><rect x="48" y="1" width="15" height="15" fill="#000000"/><rect x="64" y="1" width="15" height="15" fill="#5a5a5c"/><rect x="80" y="1" width="15" height="15" fill="#838486"/><rect x="96" y="1" width="15" height="15" fill="#a7a8aa"/><rect x="112" y="1" width="15" height="15" fill="#d0d1d3"/><rect x="128" y="1" width="15" height="15" fill="#ed1c24"/><rect x="144" y="1" width="15" height="15" fill="#f26a4b"/><rect x="160" y="1" width="15" height="15" fill="#f69679"/><rect x="176" y="1" width="15" height="15" fill="#fbc7af"/><rect x="0" y="17" width="15" height="15" fill="#22b14c"/><rect x="16" y="17" width="15" height="15" fill="#6cc276"/><rect x="32" y="17" width="15" height="15" fill="#9bd4a0"/><rect x="48" y="17" width="15" height="15" fill="#c9e7cb"/><rect x="64" y="17" width="15" height="15" fill="#0072bc"/><rect x="80" y="17" width="15" height="15" fill="#3f8dcf"/><rect x="96" y="17" width="15" height="15" fill="#7da7d9"/><rect x="112" y="17" width="15" height="15" fill="#b8cdec"/><rect x="128" y="17" width="15" height="15" fill="#f7941d"/><rect x="144" y="17" width="15" height="15" fill="#fbaf5d"/><rect x="160" y="17" width="15" height="15" fill="#fdc689"/><rect x="176" y="17" width="15" height="15" fill="#fedfc0"/><rect x="0" y="33" width="15" height="15" fill="#92278f"/><rect x="16" y="33" width="15" height="15" fill="#a864a8"/><rect x="32" y="33" width="15" height="15" fill="#bd8cbf"/><rect x="48" y="33" width="15" height="15" fill="#dbc3df"/><rect x="64" y="33" width="15" height="15" fill="#00aeef"/><rect x="80" y="33" width="15" height="15" fill="#3fc3f2"/><rect x="96" y="33" width="15" height="15" fill="#85d4f6"/><rect x="112" y="33" width="15" height="15" fill="#c4e9fb"/><rect x="128" y="33" width="15" height="15" fill="#fff200"/><rect x="144" y="33" width="15" height="15" fill="#fff568"/><rect x="160" y="33" width="15" height="15" fill="#fff899"/><rect x="176" y="33" width="15" height="15" fill="#fffbcc"/><rect x="0" y="49" width="15" height="15" fill="url(#sg1)"/><rect x="16" y="49" width="15" height="15" fill="#333"/><circle cx="23.5" cy="56.5" r="7.5" fill="url(#sg2)" shape-rendering="auto"/><rect x="32" y="49" width="15" height="15" fill="url(#sg3)"/><rect x="48" y="49" width="15" height="15" fill="url(#sg4)"/><rect x="64" y="49" width="15" height="15" fill="#fff"/><circle cx="71.5" cy="57.5" r="5.500" fill="#0a9a3a" shape-rendering="auto"/><circle cx="71.5" cy="57.5" r="2.300" fill="#064a20" shape-rendering="auto"/><rect x="80" y="49" width="15" height="15" fill="url(#sp2)"/><rect x="96" y="49" width="15" height="15" fill="#fff"/><rect x="97" y="49" width="3" height="15" fill="#d43a2a" opacity=".75"/><rect x="103" y="49" width="3" height="15" fill="#d43a2a" opacity=".75"/><rect x="109" y="49" width="3" height="15" fill="#d43a2a" opacity=".75"/><rect x="96" y="50" width="15" height="3" fill="#d43a2a" opacity=".6"/><rect x="96" y="56" width="15" height="3" fill="#d43a2a" opacity=".6"/><rect x="96" y="62" width="15" height="3" fill="#d43a2a" opacity=".6"/><rect x="112" y="49" width="15" height="15" fill="#9a9a9a"/><path d="M112 49L119.5 56.5L127 49Z" fill="#d8d8d8" shape-rendering="auto"/><path d="M112 64L119.5 56.5L127 64Z" fill="#555" shape-rendering="auto"/><path d="M112 49L119.5 56.5L112 64Z" fill="#b8b8b8" shape-rendering="auto"/><rect x="128" y="49" width="15" height="15" fill="#fff"/><circle cx="130.5" cy="51.5" r="2" fill="none" stroke="#2a3a9a" stroke-width="1.200" shape-rendering="auto"/><circle cx="130.5" cy="56.5" r="2" fill="none" stroke="#2a3a9a" stroke-width="1.200" shape-rendering="auto"/><circle cx="130.5" cy="61.5" r="2" fill="none" stroke="#2a3a9a" stroke-width="1.200" shape-rendering="auto"/><circle cx="135.5" cy="51.5" r="2" fill="none" stroke="#2a3a9a" stroke-width="1.200" shape-rendering="auto"/><circle cx="135.5" cy="56.5" r="2" fill="none" stroke="#2a3a9a" stroke-width="1.200" shape-rendering="auto"/><circle cx="135.5" cy="61.5" r="2" fill="none" stroke="#2a3a9a" stroke-width="1.200" shape-rendering="auto"/><circle cx="140.5" cy="51.5" r="2" fill="none" stroke="#2a3a9a" stroke-width="1.200" shape-rendering="auto"/><circle cx="140.5" cy="56.5" r="2" fill="none" stroke="#2a3a9a" stroke-width="1.200" shape-rendering="auto"/><circle cx="140.5" cy="61.5" r="2" fill="none" stroke="#2a3a9a" stroke-width="1.200" shape-rendering="auto"/><rect x="144" y="49" width="15" height="15" fill="#e01020"/><rect x="144" y="54" width="15" height="4" fill="#fff"/><rect x="144" y="49" width="15" height="2" fill="#fff"/><rect x="160" y="49" width="15" height="15" fill="#fff"/><circle cx="163" cy="52" r="2.300" fill="#ec008c" shape-rendering="auto"/><circle cx="169" cy="51" r="2.300" fill="#00aeef" shape-rendering="auto"/><circle cx="172" cy="56" r="2.300" fill="#22b14c" shape-rendering="auto"/><circle cx="164" cy="58" r="2.300" fill="#fff200" shape-rendering="auto"/><circle cx="168" cy="61" r="2.300" fill="#2e3192" shape-rendering="auto"/><circle cx="162" cy="62" r="2.300" fill="#ed1c24" shape-rendering="auto"/><circle cx="167" cy="55" r="2.300" fill="#f7941d" shape-rendering="auto"/><circle cx="173" cy="61" r="2.300" fill="#ec008c" shape-rendering="auto"/><rect x="176" y="49" width="15" height="15" fill="#7a8a20"/><rect x="180" y="49" width="6" height="15" fill="#2a7a2a"/><rect x="176" y="53" width="15" height="3" fill="#a8a030" opacity=".8"/><rect x="176" y="59" width="15" height="3" fill="#c8b040" opacity=".7"/></svg>
<div class="a" style="left:1233px;top:213px;width:14px;height:64px;background:#fafafc"></div>
<div class="a" style="left:1233px;top:215px;width:14px;height:15px;background:linear-gradient(#fdfdff,#e8e8f2 55%,#c8c8dc);border:1px solid #b0b0c4;border-radius:2px"></div>
<svg class="a" style="left:1235px;top:219px" width="9" height="7" viewBox="0 0 9 7"><path d="M1 5.800l3.500-3.800L8 5.800" stroke="#2a2a2a" stroke-width="2" fill="none"/></svg>
<div class="a" style="left:1233px;top:262px;width:14px;height:15px;background:linear-gradient(#fdfdff,#e8e8f2 55%,#c8c8dc);border:1px solid #b0b0c4;border-radius:2px"></div>
<svg class="a" style="left:1235px;top:267px" width="9" height="7" viewBox="0 0 9 7"><path d="M1 1.200l3.500 3.800L8 1.200" stroke="#2a2a2a" stroke-width="2" fill="none"/></svg>
<div class="a" style="left:1233px;top:232px;width:14px;height:15px;background:linear-gradient(90deg,#fdfdff,#e4e4f0 60%,#ccccde);border:1px solid #b0b0c4;border-radius:2px"></div>
<div class="a" style="left:1237px;top:236px;width:7px;height:7px;background:repeating-linear-gradient(#8c8ca8 0 1px,transparent 1px 2px)"></div>
<div class="a" style="left:1042px;top:279px;width:30px;height:12px;background:#e9e9da;border:1px solid #c4c4b0;border-radius:3px"></div>
<svg class="a" style="left:1041px;top:278px" width="207" height="15" viewBox="1041 278 207 15"><defs><linearGradient id="ig1" x1="0" x2="1"><stop offset="0" stop-color="#fff"/><stop offset="1" stop-color="#000"/></linearGradient></defs><rect x="1051.500" y="280.500" width="5" height="5" fill="#bbb" stroke="#111"/><rect x="1055.500" y="282.500" width="5" height="5" fill="#888" stroke="#111"/><rect x="1059.500" y="284.500" width="4" height="5" fill="#444" stroke="#111"/><rect x="1082.500" y="280.500" width="10" height="10" fill="#8c8c8c" stroke="#444"/><rect x="1113.500" y="280.500" width="10" height="10" fill="url(#ig1)" stroke="#444"/><rect x="1144.500" y="280.500" width="10" height="10" fill="#fff" stroke="#222"/><path d="M1145 281l9 9M1154 281l-9 9M1149.500 281v9M1145 285.500h9" stroke="#222" stroke-width="1"/><rect x="1147.500" y="283.500" width="4" height="4" fill="#222"/><rect x="1181.500" y="281.500" width="8" height="8" fill="#fff" stroke="#333"/><rect x="1185" y="285" width="5" height="5" fill="#333"/><rect x="1186" y="286" width="3" height="3" fill="#fff"/><path d="M1212.500 283.500h8l-1 7h-6z" fill="#eee" stroke="#888" stroke-width="1"/><path d="M1211.500 282.500h10M1215 281h3" stroke="#888" stroke-width="1.200"/><path d="M1215 285v4M1218 285v4" stroke="#999" stroke-width=".8"/></svg>
<div class="a" style="left:1244px;top:281px;width:2px;height:2px;background:#b4ac94"></div><div class="a" style="left:1240px;top:285px;width:2px;height:2px;background:#b4ac94"></div><div class="a" style="left:1244px;top:285px;width:2px;height:2px;background:#b4ac94"></div><div class="a" style="left:1236px;top:289px;width:2px;height:2px;background:#b4ac94"></div><div class="a" style="left:1240px;top:289px;width:2px;height:2px;background:#b4ac94"></div><div class="a" style="left:1244px;top:289px;width:2px;height:2px;background:#b4ac94"></div>
<div class="a" style="left:1039px;top:294px;width:210px;height:3px;background:linear-gradient(#c8c8e2 0 1px,#fff 1px)"></div>
<svg class="a" style="left:1041px;top:297px" width="207" height="15" viewBox="1041 297 207 15"><rect x="1041" y="297" width="207" height="15" fill="#e0dfe4"/><path d="M1041 297H1248V301H1232C1224 301 1224 312 1216 312H1041Z" fill="#9c9c9c"/><path d="M1045.5 312V301Q1045.5 298 1048.5 298H1074C1082 298 1080 312 1088 312Z" fill="#b9b9b6"/><path d="M1047.5 299V309" stroke="#777" stroke-width="1"/><path d="M1087.5 312V301Q1087.5 298 1090.5 298H1156C1164 298 1172 312 1180 312Z" fill="#e0dfe4"/><path d="M1087.5 312V301Q1087.5 298 1090.5 298H1156C1164 298 1172 311.5 1180 311.5H1216" fill="none" stroke="#f6f6fa" stroke-width="1"/><path d="M1086.0 310V301" stroke="#707070" stroke-width="1"/></svg>
<div class="t" style="left:1049.5px;top:301.5px;letter-spacing:0.13px;color:#555;">Stroke</div>
<svg class="a" style="left:1089px;top:301px" width="8" height="10" viewBox="0 0 8 10"><path d="M4 0l3.500 4h-7zM4 10l3.500-4h-7z" fill="#333"/><path d="M0 5h8" stroke="#bbb" stroke-width=".8"/></svg>
<div class="t" style="left:1098.0px;top:302.5px;">Transparency</div>
<div class="a" style="left:1041px;top:312px;width:207px;height:27px;background:#e0dfe4"></div>
<div class="a" style="left:1046px;top:318px;width:95px;height:19px;border:1px solid #7f9db9;background:#fff;box-shadow:inset 0 0 0 1px #f0f0f4"></div>
<div class="a" style="left:1124px;top:319px;width:16px;height:17px;background:linear-gradient(#fafaff,#e0e0ec 45%,#c0c0d6);border:1px solid #a4a4bc;border-radius:2px"></div>
<svg class="a" style="left:1128px;top:325px" width="9" height="7" viewBox="0 0 9 7"><path d="M1 1.200l3.500 3.800L8 1.200" stroke="#2a2a2a" stroke-width="2" fill="none"/></svg>
<div class="t" style="left:1049.5px;top:322.5px;letter-spacing:-0.12px;">Normal</div>
<div class="t" style="left:1148.0px;top:322.5px;letter-spacing:0.04px;">Opacity:</div>
<div class="a" style="left:1189px;top:318px;width:46px;height:18px;border:1px solid #a0a0a0;background:#fff"></div>
<div class="a" style="left:1219px;top:319px;width:15px;height:16px;background:#d6d6de;border-left:1px solid #a0a0a0"></div>
<svg class="a" style="left:1224px;top:323px" width="7" height="9" viewBox="0 0 7 9"><path d="M1.500 1l3.800 3.500L1.500 8" stroke="#2a2a2a" stroke-width="2" fill="none"/></svg>
<div class="t" style="left:1193.0px;top:322.5px;letter-spacing:-0.73px;">100</div>
<div class="t" style="left:1236.0px;top:322.5px;letter-spacing:-0.41px;">%</div>
<div class="a" style="left:1038px;top:343px;width:212px;height:248px;background:#f0f0f6;border:1px solid #c4c4e0"></div>
<div class="a" style="left:1038px;top:343px;width:212px;height:15px;background:linear-gradient(#f2f2f9,#dedeec 30%,#ececf5 65%,#fcfcfe);border:1px solid #c4c4e0;border-bottom:1px solid #c8c8e2"></div>
<div class="a" style="left:1218px;top:345px;width:12px;height:13px;border:1px solid #b4b4cc;border-radius:3px;background:linear-gradient(#fcfcff,#dcdcea)"></div>
<div class="a" style="left:1221px;top:352px;width:6px;height:2px;background:#a8a8c0;border-bottom:1px solid #fff"></div>
<div class="a" style="left:1232px;top:345px;width:13px;height:13px;border:1px solid #e4acb0;border-radius:3px;background:linear-gradient(#f0b8bc,#e4a0a6)"></div>
<svg class="a" style="left:1232px;top:345px" width="13" height="13"><path d="M3.500 3.500l6 6M9.500 3.500l-6 6" stroke="#fff" stroke-width="2.200" fill="none"/></svg>
<svg class="a" style="left:1041px;top:359px" width="207" height="15" viewBox="1041 359 207 15"><rect x="1041" y="359" width="207" height="15" fill="#e0dfe4"/><path d="M1041 359H1248V363H1232C1224 363 1224 374 1216 374H1041Z" fill="#9c9c9c"/><path d="M1109.5 374V363Q1109.5 360 1112.5 360H1174C1182 360 1182 374 1190 374Z" fill="#b9b9b6"/><path d="M1111.5 361V371" stroke="#777" stroke-width="1"/><path d="M1045.5 374V363Q1045.5 360 1048.5 360H1098C1106 360 1110 374 1118 374Z" fill="#e0dfe4"/><path d="M1045.5 374V363Q1045.5 360 1048.5 360H1098C1106 360 1110 373.5 1118 373.5H1216" fill="none" stroke="#f6f6fa" stroke-width="1"/><path d="M1044.0 372V363" stroke="#707070" stroke-width="1"/></svg>
<div class="t" style="left:1049.8px;top:363.5px;letter-spacing:-0.09px;">Appearance</div>
<div class="t" style="left:1116.3px;top:363.5px;letter-spacing:-0.17px;color:#555;">Graphic Styles</div>
<div class="a" style="left:1041px;top:374px;width:207px;height:97px;background:#e0dfe4"></div>
<div class="a" style="left:1041px;top:375px;width:207px;height:1px;background:#000"></div>
<div class="a" style="left:1041px;top:395px;width:192px;height:1px;background:#222"></div>
<div class="a" style="left:1041px;top:416px;width:192px;height:1px;background:#f4f4f8"></div>
<div class="a" style="left:1041px;top:436px;width:192px;height:1px;background:#f4f4f8"></div>
<div class="a" style="left:1041px;top:455px;width:192px;height:1px;background:#000"></div>
<div class="a" style="left:1043px;top:378px;width:15px;height:15px;border:1px solid #000;background:linear-gradient(90deg,#fff 30%,#c4c4c4)"></div>
<div class="t" style="left:1062.5px;top:381.5px;font-weight:bold;">No Selection</div>
<div class="t" style="left:1062.5px;top:401.5px;letter-spacing:0.19px;">Stroke:</div>
<div class="a" style="left:1104px;top:399px;width:14px;height:14px;border:1px solid #000;background:#000;box-shadow:inset 0 0 0 1px #fff,inset 0 0 0 2px #000"></div>
<div class="t" style="left:1127.8px;top:401.5px;letter-spacing:-0.09px;">0.5 pt</div>
<div class="t" style="left:1062.5px;top:421.5px;letter-spacing:-0.11px;">Fill:</div>
<div class="a" style="left:1104px;top:419px;width:14px;height:14px;border:1px solid #000;background:linear-gradient(90deg,#c8c8c8,#fff);box-shadow:inset 0 0 0 1px #fff,inset 0 0 0 2px #000"></div>
<div class="t" style="left:1062.5px;top:441.5px;">Default Transparency</div>
<div class="a" style="left:1233px;top:376px;width:14px;height:79px;background:#fdfdfe"></div>
<div class="a" style="left:1233px;top:378px;width:14px;height:15px;background:#f0f0ea;border:1px solid #e4e3da;border-radius:2px"></div>
<svg class="a" style="left:1235px;top:382px" width="9" height="7" viewBox="0 0 9 7"><path d="M1 5.800l3.500-3.800L8 5.800" stroke="#d0cfc4" stroke-width="2" fill="none"/></svg>
<div class="a" style="left:1233px;top:440px;width:14px;height:15px;background:#f0f0ea;border:1px solid #e4e3da;border-radius:2px"></div>
<svg class="a" style="left:1235px;top:444px" width="9" height="7" viewBox="0 0 9 7"><path d="M1 1.200l3.500 3.800L8 1.200" stroke="#d0cfc4" stroke-width="2" fill="none"/></svg>
<div class="a" style="left:1072px;top:457px;width:30px;height:12px;background:#e9e9da;border:1px solid #c4c4b0;border-radius:3px"></div>
<svg class="a" style="left:1041px;top:456px" width="207" height="15" viewBox="1041 456 207 15"><defs><radialGradient id="ib" cx=".35" cy=".35" r=".7"><stop offset="0" stop-color="#fff"/><stop offset="1" stop-color="#888"/></radialGradient></defs><circle cx="1083" cy="463.500" r="3.800" fill="url(#ib)" stroke="#333" stroke-width=".9"/><path d="M1086 460a4 4 0 010 7M1089 460a4 4 0 010 7M1092 460a4 4 0 010 7" stroke="#333" stroke-width="1.100" fill="none"/><circle cx="1121.500" cy="464" r="4" fill="none" stroke="#222" stroke-width="1.200"/><path d="M1118.700 461.200l5.600 5.600" stroke="#222" stroke-width="1.200"/><circle cx="1145" cy="463" r="3.500" fill="url(#ib)" stroke="#999" stroke-width=".8"/><path d="M1150 461v4l2.500-2z" fill="#666"/><circle cx="1158.500" cy="463" r="3.500" fill="#fff" stroke="#999" stroke-width=".8"/><rect x="1182.500" y="459.500" width="8" height="8" fill="#f4f4f4" stroke="#999"/><rect x="1186" y="463" width="5" height="5" fill="#999"/><rect x="1187" y="464" width="3" height="3" fill="#fff"/><path d="M1212.500 461.500h8l-1 7h-6z" fill="#eee" stroke="#777" stroke-width="1"/><path d="M1211.500 460.500h10M1215 459h3" stroke="#777" stroke-width="1.200"/><path d="M1215 463v4M1218 463v4" stroke="#999" stroke-width=".8"/></svg>
<div class="a" style="left:1244px;top:459px;width:2px;height:2px;background:#b4ac94"></div><div class="a" style="left:1240px;top:463px;width:2px;height:2px;background:#b4ac94"></div><div class="a" style="left:1244px;top:463px;width:2px;height:2px;background:#b4ac94"></div><div class="a" style="left:1236px;top:467px;width:2px;height:2px;background:#b4ac94"></div><div class="a" style="left:1240px;top:467px;width:2px;height:2px;background:#b4ac94"></div><div class="a" style="left:1244px;top:467px;width:2px;height:2px;background:#b4ac94"></div>
<div class="a" style="left:1039px;top:471px;width:210px;height:4px;background:linear-gradient(#f0f0f6 0 1px,#c8c8e2 1px 2px,#fff 2px)"></div>
<svg class="a" style="left:1041px;top:475px" width="207" height="16" viewBox="1041 475 207 16"><rect x="1041" y="475" width="207" height="16" fill="#e0dfe4"/><path d="M1041 475H1248V479H1232C1224 479 1224 491 1216 491H1041Z" fill="#9c9c9c"/><path d="M1045.5 491V479Q1045.5 476 1048.5 476H1074C1082 476 1086 491 1094 491Z" fill="#e0dfe4"/><path d="M1045.5 491V479Q1045.5 476 1048.5 476H1074C1082 476 1086 490.5 1094 490.5H1216" fill="none" stroke="#f6f6fa" stroke-width="1"/><path d="M1044.0 489V479" stroke="#707070" stroke-width="1"/></svg>
<div class="t" style="left:1049.8px;top:480.5px;letter-spacing:-0.34px;">Layers</div>
<div class="a" style="left:1041px;top:491px;width:207px;height:98px;background:#e0dfe4"></div>
<div class="a" style="left:1041px;top:492px;width:207px;height:1px;background:#000"></div>
<div class="a" style="left:1100px;top:533px;width:131px;height:20px;background:#b1b1c1"></div>
<div class="a" style="left:1041px;top:512px;width:44px;height:1px;background:#555"></div>
<div class="a" style="left:1085px;top:512px;width:146px;height:1px;background:#f4f4f8"></div>
<div class="a" style="left:1045px;top:496px;width:13px;height:14px;border:1px solid #c8c8cc;background:#e6e6ec"></div>
<div class="a" style="left:1067px;top:496px;width:13px;height:14px;border:1px solid #c8c8cc;background:#e6e6ec"></div>
<svg class="a" style="left:1088px;top:497px" width="8" height="12" viewBox="0 0 8 12"><path d="M1 1l5.500 5L1 11z" fill="#f4f8fc" stroke="#6a8ab0" stroke-width="1"/></svg>
<div class="a" style="left:1105px;top:495px;width:16px;height:16px;border:1px solid #000;background:#fff"></div>
<div class="t" style="left:1124.5px;top:498.5px;letter-spacing:-0.05px;">Layer 2</div>
<svg class="a" style="left:1207px;top:498px" width="11" height="11"><circle cx="5.500" cy="5.500" r="4" fill="none" stroke="#444" stroke-width="1.100"/></svg>
<div class="a" style="left:1041px;top:532px;width:44px;height:1px;background:#555"></div>
<div class="a" style="left:1085px;top:532px;width:146px;height:1px;background:#f4f4f8"></div>
<div class="a" style="left:1045px;top:516px;width:13px;height:14px;border:1px solid #c8c8cc;background:#e6e6ec"></div>
<div class="a" style="left:1067px;top:516px;width:13px;height:14px;border:1px solid #c8c8cc;background:#e6e6ec"></div>
<svg class="a" style="left:1088px;top:517px" width="8" height="12" viewBox="0 0 8 12"><path d="M1 1l5.500 5L1 11z" fill="#f4f8fc" stroke="#6a8ab0" stroke-width="1"/></svg>
<div class="a" style="left:1105px;top:515px;width:16px;height:16px;border:1px solid #000;background:#fff"></div>
<div class="t" style="left:1124.5px;top:518.5px;letter-spacing:-0.05px;">Layer 3</div>
<svg class="a" style="left:1207px;top:518px" width="11" height="11"><circle cx="5.500" cy="5.500" r="4" fill="none" stroke="#444" stroke-width="1.100"/></svg>
<div class="a" style="left:1041px;top:552px;width:44px;height:1px;background:#000"></div>
<div class="a" style="left:1045px;top:536px;width:13px;height:14px;border:1px solid #c8c8cc;background:#e6e6ec"></div>
<div class="a" style="left:1067px;top:536px;width:13px;height:14px;border:1px solid #c8c8cc;background:#e6e6ec"></div>
<svg class="a" style="left:1088px;top:537px" width="8" height="12" viewBox="0 0 8 12"><path d="M1 1l5.500 5L1 11z" fill="#f4f8fc" stroke="#6a8ab0" stroke-width="1"/></svg>
<div class="a" style="left:1105px;top:535px;width:16px;height:16px;border:1px solid #000;background:#fff"></div>
<div class="t" style="left:1124.5px;top:538.5px;letter-spacing:0.28px;font-weight:bold;">Layer 1</div>
<svg class="a" style="left:1207px;top:538px" width="11" height="11"><circle cx="5.500" cy="5.500" r="4" fill="none" stroke="#444" stroke-width="1.100"/></svg>
<svg class="a" style="left:1106px;top:496px" width="14" height="14" viewBox="0 0 14 14"><path d="M0 9h4v-3h3v-4h4v3h3v9h-14z" fill="#111"/><rect x="5" y="7" width="3" height="2" fill="#fff"/><rect x="10" y="8" width="2" height="2" fill="#e0409a"/><rect x="6" y="2" width="2" height="2" fill="#e0409a"/></svg>
<svg class="a" style="left:1106px;top:516px" width="14" height="14"><path d="M3.500 0v14M10.500 0v14" stroke="#888" stroke-width="1"/><path d="M6 2v9M8 2v9" stroke="#ccc" stroke-width="1"/></svg>
<svg class="a" style="left:1106px;top:536px" width="14" height="14"><rect x="5" y="3" width="3" height="3" fill="#999"/><rect x="1" y="8" width="3" height="3" fill="#999"/><rect x="5.500" y="8" width="3" height="3" fill="#999"/><rect x="10" y="8" width="3" height="3" fill="#999"/><path d="M0 11.500h14" stroke="#bbb"/></svg>
<svg class="a" style="left:1044px;top:536px" width="15" height="13" viewBox="0 0 15 13"><path d="M.5 7c2-4 5-5 7-5s5 1 7 5c-2 3-5 4-7 4s-5-1-7-4z" fill="#fff" stroke="#111" stroke-width="1"/><circle cx="7.500" cy="6.800" r="3" fill="#111"/><circle cx="6.700" cy="6" r="1" fill="#fff"/><path d="M1 4c2-2.500 4-3.500 6.500-3.500S12 1.500 14 4" stroke="#111" stroke-width="1.200" fill="none"/></svg>
<div class="a" style="left:1084px;top:493px;width:1px;height:60px;background:#000"></div>
<div class="a" style="left:1041px;top:553px;width:192px;height:1px;background:#000"></div>
<svg class="a" style="left:1225px;top:533px" width="6" height="6"><path d="M0 0h6v6z" fill="#000"/></svg>
<div class="a" style="left:1041px;top:572px;width:192px;height:1px;background:#000"></div>
<div class="a" style="left:1233px;top:493px;width:14px;height:80px;background:#fdfdfe"></div>
<div class="a" style="left:1233px;top:495px;width:14px;height:15px;background:#f0f0ea;border:1px solid #e4e3da;border-radius:2px"></div>
<svg class="a" style="left:1235px;top:499px" width="9" height="7" viewBox="0 0 9 7"><path d="M1 5.800l3.500-3.800L8 5.800" stroke="#d0cfc4" stroke-width="2" fill="none"/></svg>
<div class="a" style="left:1233px;top:558px;width:14px;height:15px;background:#f0f0ea;border:1px solid #e4e3da;border-radius:2px"></div>
<svg class="a" style="left:1235px;top:562px" width="9" height="7" viewBox="0 0 9 7"><path d="M1 1.200l3.500 3.800L8 1.200" stroke="#d0cfc4" stroke-width="2" fill="none"/></svg>
<div class="t" style="left:1049.8px;top:574.5px;letter-spacing:-0.23px;">3 Layers</div>
<svg class="a" style="left:1041px;top:573px" width="207" height="16" viewBox="1041 573 207 16"><rect x="1117.500" y="575.500" width="6" height="6" fill="none" stroke="#333" stroke-dasharray="1 1"/><circle cx="1124" cy="582" r="3.500" fill="#eee" stroke="#222" stroke-width="1"/><path d="M1124 582v-3.500a3.500 3.500 0 013.500 3.500z" fill="#222"/><path d="M1146 576v4h5M1149 578l2 2-2 2" stroke="#111" stroke-width="1.200" fill="none"/><rect x="1153.500" y="577.500" width="7" height="7" fill="#fff" stroke="#333"/><rect x="1156.500" y="580.500" width="4" height="4" fill="#333"/><rect x="1181.500" y="577.500" width="8" height="8" fill="#fff" stroke="#333"/><rect x="1185" y="581" width="5" height="5" fill="#333"/><rect x="1186" y="582" width="3" height="3" fill="#fff"/><path d="M1212.500 578.500h8l-1 7h-6z" fill="#eee" stroke="#333" stroke-width="1"/><path d="M1211.500 577.500h10M1215 576h3" stroke="#333" stroke-width="1.200"/><path d="M1215 580v4M1218 580v4" stroke="#555" stroke-width=".8"/></svg>
<div class="a" style="left:1244px;top:577px;width:2px;height:2px;background:#b4ac94"></div><div class="a" style="left:1240px;top:581px;width:2px;height:2px;background:#b4ac94"></div><div class="a" style="left:1244px;top:581px;width:2px;height:2px;background:#b4ac94"></div><div class="a" style="left:1236px;top:585px;width:2px;height:2px;background:#b4ac94"></div><div class="a" style="left:1240px;top:585px;width:2px;height:2px;background:#b4ac94"></div><div class="a" style="left:1244px;top:585px;width:2px;height:2px;background:#b4ac94"></div>
<!--/RIGHTPANELS-->
<!--DIALOG-->
<div class="a" style="left:303px;top:201px;width:675px;height:622px;background:#e0dfe4;border:1px solid #6c6c8a;border-radius:6px 6px 0 0;box-shadow:inset 0 0 0 1px #fff,inset 0 0 0 2px #6c6c8a"></div>
<div class="a" style="left:304px;top:202px;width:673px;height:27px;border-radius:5px 5px 0 0;background:linear-gradient(#fff 0,#f4f4fa 1px,#b4b4cc 4px,#a8a8c4 6px,#c4c4d8 12px,#e8e8f0 19px,#fff 24px,#fff 27px)"></div>
<div class="a" style="left:304px;top:229px;width:673px;height:1px;background:#6c6c8a"></div>
<div class="t" style="left:311.0px;top:210.0px;letter-spacing:0.57px;font-size:13px;font-weight:bold;">Print</div>
<div class="t" style="left:495.5px;top:249.0px;letter-spacing:-0.12px;font-size:12px;">Print Pre<u>s</u>et:</div>
<div class="t" style="left:520.7px;top:279.0px;letter-spacing:0.08px;font-size:12px;"><u>P</u>rinter:</div>
<div class="t" style="left:534.6px;top:309.0px;letter-spacing:-0.65px;font-size:12px;">PP<u>D</u>:</div>
<div class="a" style="left:571px;top:245px;width:320px;height:20px;border:1px solid #7f9db9;background:#fff;box-shadow:inset 0 0 0 1px #f4f4f8"></div>
<div class="a" style="left:873px;top:246px;width:17px;height:18px;background:linear-gradient(#fafaff,#e0e0ec 45%,#c0c0d6);border:1px solid #a4a4bc;border-radius:2px"></div>
<svg class="a" style="left:877px;top:251px" width="9" height="7" viewBox="0 0 9 7"><path d="M1 1.200l3.500 3.800L8 1.200" stroke="#2a2a2a" stroke-width="2" fill="none"/></svg>
<div class="t" style="left:575.0px;top:249.0px;letter-spacing:-0.39px;font-size:12px;">Custom</div>
<div class="a" style="left:571px;top:275px;width:320px;height:20px;border:1px solid #7f9db9;background:#fff;box-shadow:inset 0 0 0 1px #f4f4f8"></div>
<div class="a" style="left:873px;top:276px;width:17px;height:18px;background:linear-gradient(#fafaff,#e0e0ec 45%,#c0c0d6);border:1px solid #a4a4bc;border-radius:2px"></div>
<svg class="a" style="left:877px;top:281px" width="9" height="7" viewBox="0 0 9 7"><path d="M1 1.200l3.500 3.800L8 1.200" stroke="#2a2a2a" stroke-width="2" fill="none"/></svg>
<div class="t" style="left:575.0px;top:279.0px;letter-spacing:-0.21px;font-size:12px;">DesignJet 800</div>
<div class="a" style="left:571px;top:305px;width:320px;height:20px;border:1px solid #cfcdc0;background:#e0dfe4"></div>
<div class="a" style="left:873px;top:307px;width:16px;height:16px;background:#eaeae6;border:1px solid #e0dfd6;border-radius:2px"></div>
<svg class="a" style="left:877px;top:312px" width="9" height="7" viewBox="0 0 9 7"><path d="M1 1.200l3.500 3.800L8 1.200" stroke="#c9c9c0" stroke-width="2" fill="none"/></svg>
<div class="a" style="left:322px;top:352px;width:201px;height:128px;background:#fff;border:1px solid #fff;border-top:2px solid #333;border-left:2px solid #333"></div>
<div class="a" style="left:324px;top:354px;width:182px;height:14px;background:#b1b1c1"></div>
<div class="t" style="left:327.7px;top:356.5px;letter-spacing:-0.23px;">General</div>
<div class="t" style="left:327.7px;top:370.5px;letter-spacing:-0.13px;">Setup</div>
<div class="t" style="left:327.7px;top:384.5px;letter-spacing:-0.10px;">Marks and Bleed</div>
<div class="t" style="left:327.7px;top:398.5px;letter-spacing:0.24px;">Output</div>
<div class="t" style="left:327.7px;top:412.5px;letter-spacing:-0.19px;">Graphics</div>
<div class="t" style="left:327.7px;top:426.5px;letter-spacing:-0.03px;">Color Management</div>
<div class="t" style="left:327.7px;top:440.5px;letter-spacing:0.06px;">Advanced</div>
<div class="t" style="left:327.7px;top:454.5px;letter-spacing:-0.11px;">Summary</div>
<div class="a" style="left:506px;top:354px;width:16px;height:124px;background:#f8f8fc"></div>
<div class="a" style="left:507px;top:355px;width:14px;height:15px;background:#f0f0ea;border:1px solid #e4e3da;border-radius:2px"></div>
<svg class="a" style="left:510px;top:360px" width="9" height="7" viewBox="0 0 9 7"><path d="M1 5.800l3.500-3.800L8 5.800" stroke="#d0cfc4" stroke-width="2" fill="none"/></svg>
<div class="a" style="left:507px;top:462px;width:14px;height:15px;background:#f0f0ea;border:1px solid #e4e3da;border-radius:2px"></div>
<svg class="a" style="left:510px;top:467px" width="9" height="7" viewBox="0 0 9 7"><path d="M1 1.200l3.500 3.800L8 1.200" stroke="#d0cfc4" stroke-width="2" fill="none"/></svg>
<div class="t" style="left:534.8px;top:353.0px;letter-spacing:-0.46px;font-size:12px;">General</div>
<div class="a" style="left:535px;top:366px;width:425px;height:2px;background:linear-gradient(#9c9c9c 0 1px,#fff 1px)"></div>
<div class="t" style="left:535.0px;top:382.0px;letter-spacing:-0.60px;font-size:12px;">Cop<u>i</u>es:</div>
<div class="a" style="left:583px;top:378px;width:28px;height:20px;border:1px solid #8c9cb0;background:#fff"></div>
<div class="t" style="left:587.5px;top:383.0px;font-size:12px;">1</div>
<div class="a" style="left:621px;top:381px;width:13px;height:13px;border:1px solid #cbc9bc;background:#fff"></div>
<div class="t" style="left:636.5px;top:383.0px;letter-spacing:-0.22px;font-size:12px;color:#aeae9c;">Co<u>l</u>late</div>
<div class="a" style="left:685px;top:381px;width:13px;height:13px;border:1px solid #1c5180;background:linear-gradient(135deg,#dcdcd6,#fff 70%)"></div>
<div class="t" style="left:700.0px;top:383.0px;letter-spacing:-0.28px;font-size:12px;">Reverse <u>O</u>rder</div>
<div class="t" style="left:538.6px;top:412.0px;letter-spacing:-0.73px;font-size:12px;">Pages:</div>
<svg class="a" style="left:582.5px;top:410.5px" width="14" height="14" viewBox="0 0 14 14"><circle cx="7" cy="7" r="5.800" fill="#f8f8f6" stroke="#24588c" stroke-width="1.100"/><circle cx="7" cy="7" r="4.600" fill="none" stroke="#e0e0da" stroke-width="1"/><circle cx="7" cy="7" r="2.500" fill="#30b030"/><circle cx="6.300" cy="6.300" r="1" fill="#a0f0a0"/></svg>
<div class="t" style="left:598.7px;top:413.0px;letter-spacing:0.22px;font-size:12px;"><u>A</u>ll</div>
<svg class="a" style="left:582.5px;top:435.5px" width="14" height="14" viewBox="0 0 14 14"><circle cx="7" cy="7" r="5.800" fill="#e8e8ea" stroke="#cbc9bc" stroke-width="1"/></svg>
<div class="t" style="left:598.7px;top:438.0px;letter-spacing:-0.78px;font-size:12px;color:#aeae9c;"><u>R</u>ange:</div>
<div class="a" style="left:646px;top:432px;width:201px;height:20px;border:1px solid #9aa6b4;background:#e0dfe4"></div>
<div class="a" style="left:646px;top:463px;width:13px;height:13px;border:1px solid #cbc9bc;background:#fff"></div>
<div class="t" style="left:661.5px;top:465.0px;letter-spacing:-0.54px;font-size:12px;color:#aeae9c;">S<u>k</u>ip Blank Pages</div>
<div class="a" style="left:535px;top:494px;width:425px;height:114px;border:1px solid #a4a4a8;box-shadow:1px 1px 0 #fff,inset 1px 1px 0 #fff"></div>
<div class="a" style="left:544px;top:492px;width:41.5px;height:5px;background:#e0dfe4"></div>
<div class="t" style="left:549.0px;top:488.0px;letter-spacing:-0.24px;font-size:12px;color:#0046d5;">Media</div>
<div class="t" style="left:592.5px;top:509.0px;letter-spacing:-0.54px;font-size:12px;">Si<u>z</u>e:</div>
<div class="t" style="left:585.0px;top:549.0px;letter-spacing:-0.42px;font-size:12px;"><u>W</u>idth:</div>
<div class="t" style="left:554.5px;top:580.0px;font-size:12px;">Orientation:</div>
<div class="a" style="left:535px;top:626px;width:425px;height:121px;border:1px solid #a4a4a8;box-shadow:1px 1px 0 #fff,inset 1px 1px 0 #fff"></div>
<div class="a" style="left:544.8px;top:624px;width:49.5px;height:5px;background:#e0dfe4"></div>
<div class="t" style="left:549.8px;top:620.0px;letter-spacing:-0.27px;font-size:12px;color:#0046d5;">Options</div>
<div class="t" style="left:551.5px;top:641.0px;letter-spacing:-0.18px;font-size:12px;">Print Lay<u>e</u>rs:</div>
<svg class="a" style="left:551.5px;top:667.5px" width="14" height="14" viewBox="0 0 14 14"><circle cx="7" cy="7" r="5.800" fill="#f8f8f6" stroke="#24588c" stroke-width="1.100"/><circle cx="7" cy="7" r="4.600" fill="none" stroke="#e0e0da" stroke-width="1"/></svg>
<div class="t" style="left:567.5px;top:670.0px;letter-spacing:-0.39px;font-size:12px;">Do Not S<u>c</u>ale</div>
<svg class="a" style="left:551.5px;top:692.5px" width="14" height="14" viewBox="0 0 14 14"><circle cx="7" cy="7" r="5.800" fill="#f8f8f6" stroke="#24588c" stroke-width="1.100"/><circle cx="7" cy="7" r="4.600" fill="none" stroke="#e0e0da" stroke-width="1"/></svg>
<div class="t" style="left:567.5px;top:695.0px;letter-spacing:-0.28px;font-size:12px;"><u>F</u>it to Page</div>
<svg class="a" style="left:551.5px;top:717.5px" width="14" height="14" viewBox="0 0 14 14"><circle cx="7" cy="7" r="5.800" fill="#f8f8f6" stroke="#24588c" stroke-width="1.100"/><circle cx="7" cy="7" r="4.600" fill="none" stroke="#e0e0da" stroke-width="1"/><circle cx="7" cy="7" r="2.500" fill="#30b030"/><circle cx="6.300" cy="6.300" r="1" fill="#a0f0a0"/></svg>
<div class="t" style="left:567.5px;top:720.0px;letter-spacing:-0.43px;font-size:12px;">Custo<u>m</u> Scale:</div>
<div class="t" style="left:654.0px;top:720.0px;letter-spacing:-0.42px;font-size:12px;">Wid<u>t</u>h:</div>
<div class="a" style="left:697px;top:715px;width:55px;height:20px;border:1px solid #9aa6b4;background:#fff"></div>
<div class="t" style="left:700.0px;top:720.0px;letter-spacing:0.07px;font-size:12px;">50</div>
<div class="a" style="left:763px;top:715px;width:20px;height:20px;border:1px solid #a8a79a;border-radius:3px;background:linear-gradient(#f4f4ec,#dcdcd0)"></div>
<svg class="a" style="left:768px;top:717px" width="10" height="16" viewBox="0 0 10 16"><rect x="2.500" y="1" width="5" height="8.500" rx="2.500" fill="none" stroke="#333" stroke-width="1.400"/><rect x="2.500" y="6.500" width="5" height="8.500" rx="2.500" fill="none" stroke="#333" stroke-width="1.400"/><path d="M5 4.500v7" stroke="#333" stroke-width="1.200"/></svg>
<div class="t" style="left:794.0px;top:720.0px;letter-spacing:-0.29px;font-size:12px;">Hei<u>g</u>ht:</div>
<div class="a" style="left:841px;top:715px;width:55px;height:20px;border:1px solid #9aa6b4;background:#fff"></div>
<div class="t" style="left:844.0px;top:720.0px;letter-spacing:0.07px;font-size:12px;">50</div>
<div class="a" style="left:628px;top:505px;width:240px;height:19px;border:1px solid #7f9db9;background:#fff;box-shadow:inset 0 0 0 1px #f4f4f8"></div>
<div class="a" style="left:850px;top:506px;width:17px;height:17px;background:linear-gradient(#fafaff,#e0e0ec 45%,#c0c0d6);border:1px solid #a4a4bc;border-radius:2px"></div>
<svg class="a" style="left:854px;top:511px" width="9" height="7" viewBox="0 0 9 7"><path d="M1 1.200l3.500 3.800L8 1.200" stroke="#2a2a2a" stroke-width="2" fill="none"/></svg>
<div class="t" style="left:632.6px;top:509.0px;letter-spacing:-0.08px;font-size:12px;">ISO A2 - 420 x 594 mm.</div>
<div class="a" style="left:628px;top:525px;width:249px;height:152px;background:#fff;border:1px solid #000"></div>
<div class="t" style="left:632.6px;top:528.0px;letter-spacing:-0.24px;font-size:12px;">Defined by Driver</div>
<div class="a" style="left:629px;top:549px;width:231px;height:1px;background:#aca899"></div>
<div class="t" style="left:632.6px;top:558.0px;letter-spacing:-0.47px;font-size:12px;color:#aca899;">Custom</div>
<div class="t" style="left:634.0px;top:573.0px;letter-spacing:0.45px;font-size:12px;">사용자 정의 1: 210 x 297 mm.</div>
<div class="t" style="left:634.0px;top:588.0px;letter-spacing:0.45px;font-size:12px;">사용자 정의 2: 210 x 297 mm.</div>
<div class="t" style="left:634.0px;top:603.0px;letter-spacing:0.45px;font-size:12px;">사용자 정의 3: 210 x 297 mm.</div>
<div class="t" style="left:634.0px;top:618.0px;letter-spacing:0.45px;font-size:12px;">사용자 정의 4: 210 x 297 mm.</div>
<div class="t" style="left:634.0px;top:633.0px;letter-spacing:0.45px;font-size:12px;">사용자 정의 5: 210 x 297 mm.</div>
<div class="t" style="left:632.6px;top:648.0px;letter-spacing:-0.05px;font-size:12px;">ISO A4 - 210 x 297 mm.</div>
<div class="t" style="left:632.6px;top:663.0px;letter-spacing:-0.05px;font-size:12px;">ISO A3 - 297 x 420 mm.</div>
<div class="a" style="left:859px;top:526px;width:17px;height:150px;background:linear-gradient(90deg,#ececf4,#fafafc)"></div>
<div class="a" style="left:860px;top:527px;width:16px;height:16px;background:linear-gradient(#fdfdff,#e8e8f2 55%,#c8c8dc);border:1px solid #b0b0c4;border-radius:2px"></div>
<svg class="a" style="left:863px;top:532px" width="9" height="7" viewBox="0 0 9 7"><path d="M1 5.800l3.500-3.800L8 5.800" stroke="#2a2a2a" stroke-width="2" fill="none"/></svg>
<div class="a" style="left:860px;top:543px;width:16px;height:27px;background:linear-gradient(90deg,#fdfdff,#e4e4f0 60%,#ccccde);border:1px solid #a8a8c0;border-radius:2px"></div>
<div class="a" style="left:864px;top:553px;width:8px;height:7px;background:repeating-linear-gradient(#8c8ca8 0 1px,transparent 1px 2px)"></div>
<div class="a" style="left:860px;top:659px;width:16px;height:16px;background:linear-gradient(#fdfdff,#e8e8f2 55%,#c8c8dc);border:1px solid #b0b0c4;border-radius:2px"></div>
<svg class="a" style="left:863px;top:665px" width="9" height="7" viewBox="0 0 9 7"><path d="M1 1.200l3.500 3.800L8 1.200" stroke="#2a2a2a" stroke-width="2" fill="none"/></svg>
<div class="a" style="left:322px;top:786px;width:78px;height:18px;border:1px solid #1c4c84;border-radius:3px;background:linear-gradient(#fff,#f6f6fa 45%,#d4d4e2 85%,#c8c8da);"></div>
<div class="t" style="left:325.0px;top:789.0px;letter-spacing:-0.24px;font-size:12px;">Sav<u>e</u> Preset...</div>
<div class="a" style="left:412px;top:786px;width:78px;height:18px;border:1px solid #1c4c84;border-radius:3px;background:linear-gradient(#fff,#f6f6fa 45%,#d4d4e2 85%,#c8c8da);"></div>
<div class="t" style="left:430.5px;top:789.0px;letter-spacing:-0.05px;font-size:12px;">Set<u>u</u>p...</div>
<div class="a" style="left:701px;top:786px;width:78px;height:18px;border:1px solid #0a3c78;border-radius:3px;background:linear-gradient(#fff,#f6f6fa 45%,#d4d4e2 85%,#c8c8da);box-shadow:inset 0 0 0 1px #8cb0e8,inset 0 0 0 2px #c8daf4;"></div>
<div class="t" style="left:727.5px;top:789.0px;letter-spacing:0.06px;font-size:12px;">Print</div>
<div class="a" style="left:791px;top:786px;width:78px;height:18px;border:1px solid #1c4c84;border-radius:3px;background:linear-gradient(#fff,#f6f6fa 45%,#d4d4e2 85%,#c8c8da);"></div>
<div class="t" style="left:812.5px;top:789.0px;letter-spacing:-0.39px;font-size:12px;">Cancel</div>
<div class="a" style="left:881px;top:786px;width:78px;height:18px;border:1px solid #1c4c84;border-radius:3px;background:linear-gradient(#fff,#f6f6fa 45%,#d4d4e2 85%,#c8c8da);"></div>
<div class="t" style="left:907.0px;top:789.0px;letter-spacing:-0.67px;font-size:12px;">Do<u>n</u>e</div>
<!--/DIALOG-->
<!--PREVIEW-->
<div class="a" style="left:321px;top:505px;width:204px;height:270px;background:#a0a0a4;border:1px solid #b8b8bc;box-shadow:inset 0 0 0 2px #fff"></div>
<div class="a" style="left:335px;top:515px;width:178px;height:251px;background:#fff;border:1px solid #000;border-right:0"></div>
<svg class="a" style="left:336px;top:516px" width="177" height="249" viewBox="336 516 177 249" shape-rendering="crispEdges"><g stroke="#000" stroke-width="1" stroke-dasharray="2 1" fill="none"><path d="M337 519.500H511M337 522.500H511M337.500 522V758M510.500 519V758M337 740.500H512M337 758.500H511"/></g><g shape-rendering="auto"><rect x="425.500" y="581.500" width="19" height="29.500" fill="#d4d4d4" stroke="#aaa" stroke-width=".5"/><rect x="444.500" y="581.500" width="12" height="22" fill="#e6e6e6" stroke="#b0b0b0" stroke-width=".5"/><rect x="446.500" y="603.500" width="10" height="8" fill="#dcdcdc" stroke="#aaa" stroke-width=".5"/><rect x="448.500" y="605" width="6" height="6" fill="#c4c4c4"/><rect x="418.500" y="610.500" width="26" height="2" fill="#c8c8c8" stroke="#999" stroke-width=".4"/><rect x="423" y="607.500" width="3" height="3" fill="#ccc" stroke="#888" stroke-width=".4"/><circle cx="435.400" cy="598" r="6.200" fill="#6e6e6e"/><rect x="436.500" y="618.500" width="8" height="1.200" fill="#222"/><rect x="363" y="666" width="147" height="1" fill="#b4b4b4"/><rect x="374.500" y="636.500" width="22" height="10" fill="#d6d6d6" stroke="#aaa" stroke-width=".5"/><rect x="396.500" y="636.500" width="9" height="10" fill="#e0e0e0" stroke="#b4b4b4" stroke-width=".5"/><rect x="374.500" y="646.500" width="26.500" height="17.500" fill="#d4d4d4" stroke="#aaa" stroke-width=".5"/><rect x="401" y="646.500" width="4.500" height="17.500" fill="#e4e4e4" stroke="#b4b4b4" stroke-width=".5"/><rect x="375" y="664" width="7" height="2.500" fill="#aaa"/><rect x="397" y="664" width="7" height="2.500" fill="#aaa"/><rect x="377" y="632" width="1.200" height="4.500" fill="#7a9"/><rect x="377" y="629.500" width="1.200" height="3" fill="#e64"/><rect x="378.500" y="671.800" width="10.500" height="1.200" fill="#222"/><rect x="418.500" y="637.300" width="8" height="6" fill="#b0b0b0" stroke="#888" stroke-width=".6"/><rect x="424" y="643" width="1" height="8" fill="#999"/><rect x="444.800" y="636.500" width="11.800" height="12" fill="#f4f4f4" stroke="#aaa" stroke-width=".5"/><rect x="425.500" y="646.500" width="19" height="5" fill="#ececec" stroke="#aaa" stroke-width=".5"/><rect x="423.500" y="649.500" width="33" height="2.500" fill="#999"/><rect x="425.500" y="652" width="19" height="11" fill="#e0e0e0" stroke="#aaa" stroke-width=".5"/><rect x="444.800" y="652" width="11.800" height="11" fill="#ececec" stroke="#aaa" stroke-width=".5"/><rect x="423.500" y="648" width="2" height="15" fill="#ddd" stroke="#aaa" stroke-width=".4"/><rect x="425.500" y="663" width="31" height="3" fill="#8c8c8c"/><rect x="453.700" y="632" width="1.200" height="4.500" fill="#7a9"/><rect x="453.700" y="629.500" width="1.200" height="3" fill="#e64"/><rect x="435.500" y="671.800" width="10" height="1.200" fill="#222"/><rect x="478.500" y="636.500" width="8.500" height="27.500" fill="#dedede" stroke="#aaa" stroke-width=".5"/><rect x="487" y="636.500" width="22" height="27.500" fill="#d4d4d4" stroke="#aaa" stroke-width=".5"/><rect x="489" y="638" width="16" height="2" fill="#e4e4e4" stroke="#999" stroke-width=".4"/><rect x="478.500" y="648" width="30.500" height="4.500" fill="#8a8a8a"/><rect x="479.500" y="664" width="7" height="2.500" fill="#aaa"/><rect x="501" y="664" width="7" height="2.500" fill="#aaa"/><rect x="505" y="632" width="1.200" height="4.500" fill="#7a9"/><rect x="505" y="629.500" width="1.200" height="3" fill="#e64"/><rect x="491" y="671.800" width="10.500" height="1.200" fill="#222"/></g></svg>
<!--/PREVIEW-->
<!--STATUS-->
<div class="a" style="left:1257px;top:87px;width:16px;height:914px;background:linear-gradient(90deg,#ebebf3,#f4f4f9 40%,#fcfcfe)"></div>
<div class="a sbb" style="left:1258px;top:88px"></div><svg class="a" style="left:1261px;top:93px" width="9" height="7" viewBox="0 0 9 7"><path d="M1 5.800l3.500-3.800L8 5.800" stroke="#222" stroke-width="2" fill="none"/></svg>
<div class="a sbb" style="left:1258px;top:985px"></div><svg class="a" style="left:1261px;top:990px" width="9" height="7" viewBox="0 0 9 7"><path d="M1 1.200l3.500 3.800L8 1.200" stroke="#222" stroke-width="2" fill="none"/></svg>
<div class="a sbh" style="left:1258px;top:532px;width:15px;height:17px"></div><div class="a" style="left:1262px;top:537px;width:7px;height:7px;background:repeating-linear-gradient(#9a9ab0 0 1px,transparent 1px 2px)"></div>
<div class="a" style="left:7px;top:1001px;width:1250px;height:16px;background:linear-gradient(#ebebf3,#f4f4f9 40%,#fcfcfe)"></div>
<div class="a" style="left:1257px;top:1001px;width:16px;height:16px;background:#e8e8ec"></div>
<div class="a sbb" style="left:1240px;top:1002px;width:17px;height:15px"></div><svg class="a" style="left:1246px;top:1005px" width="7" height="9" viewBox="0 0 7 9"><path d="M1.500 1l3.800 3.500L1.500 8" stroke="#222" stroke-width="2" fill="none"/></svg>
<div class="a sbh" style="left:796px;top:1003px;width:17px;height:14px"></div><div class="a" style="left:801px;top:1006px;width:7px;height:7px;background:repeating-linear-gradient(90deg,#9a9ab0 0 1px,transparent 1px 2px)"></div>
<div class="a" style="left:67px;top:1001px;width:180px;height:16px;background:#e0dfe4"></div>
<div class="a" style="left:7px;top:1001px;width:60px;height:17px;border:1px solid #7f9db9;background:#fff"><i class="a" style="right:0;top:0;bottom:0;width:14px;background:linear-gradient(#f6f6fb,#dcdce8 50%,#c2c2d6);border-left:1px solid #7f9db9"></i></div><svg class="a" style="left:55px;top:1007px" width="9" height="7" viewBox="0 0 9 7"><path d="M1 1.200l3.500 3.800L8 1.200" stroke="#222" stroke-width="2" fill="none"/></svg>
<div class="t" style="left:10px;top:1005px;font-size:10px">16.67%</div>
<svg class="a" style="left:71px;top:1003px" width="13" height="13" viewBox="0 0 13 13"><circle cx="6.500" cy="6.500" r="5.300" fill="#fff" stroke="#333" stroke-width="1.200"/><path d="M4.500 4h3.500l1.500 2v3h-5z" fill="#ddd" stroke="#333" stroke-width=".8"/></svg>
<div class="t" style="left:147px;top:1007px;font-size:10px">Open</div>
<svg class="a" style="left:236px;top:1004px" width="6" height="11"><path d="M0 0v11l6-5.500z" fill="#000"/></svg>
<div class="a sbb" style="left:248px;top:1002px;width:16px;height:15px"></div><svg class="a" style="left:252px;top:1005px" width="7" height="9" viewBox="0 0 7 9"><path d="M5.500 1L1.700 4.500 5.500 8" stroke="#222" stroke-width="2" fill="none"/></svg>
<div class="a" style="left:0;top:1017px;width:1280px;height:7px;background:linear-gradient(#fff 0 2px,#d8d8e8 2px 3px,#fafafc 3px 4px,#d0d0e0 4px 6px,#e8e8f0 6px)"></div>
<div class="a" style="left:1273px;top:87px;width:7px;height:934px;background:linear-gradient(90deg,#fff 0 2px,#d8d8e8 2px 3px,#fcfcfe 3px 5px,#9c9cac 5px 6px,#8c8c9c 6px)"></div><div class="a" style="left:1276px;top:30px;width:4px;height:57px;background:linear-gradient(90deg,#fdfdff 0 2px,#ccccdc 2px 3px,#b0b0c0 3px)"></div>
<div class="a" style="left:0;top:30px;width:5px;height:57px;background:linear-gradient(90deg,#d6d6e6 0 1px,#b0b0c8 1px 2px,#fff 2px)"></div><div class="a" style="left:0;top:87px;width:6px;height:933px;background:linear-gradient(90deg,#f4f4f8 0 1px,#d4d4e4 1px 3px,#e2e2ee 3px 5px,#fff 5px)"></div>

</body></html>
